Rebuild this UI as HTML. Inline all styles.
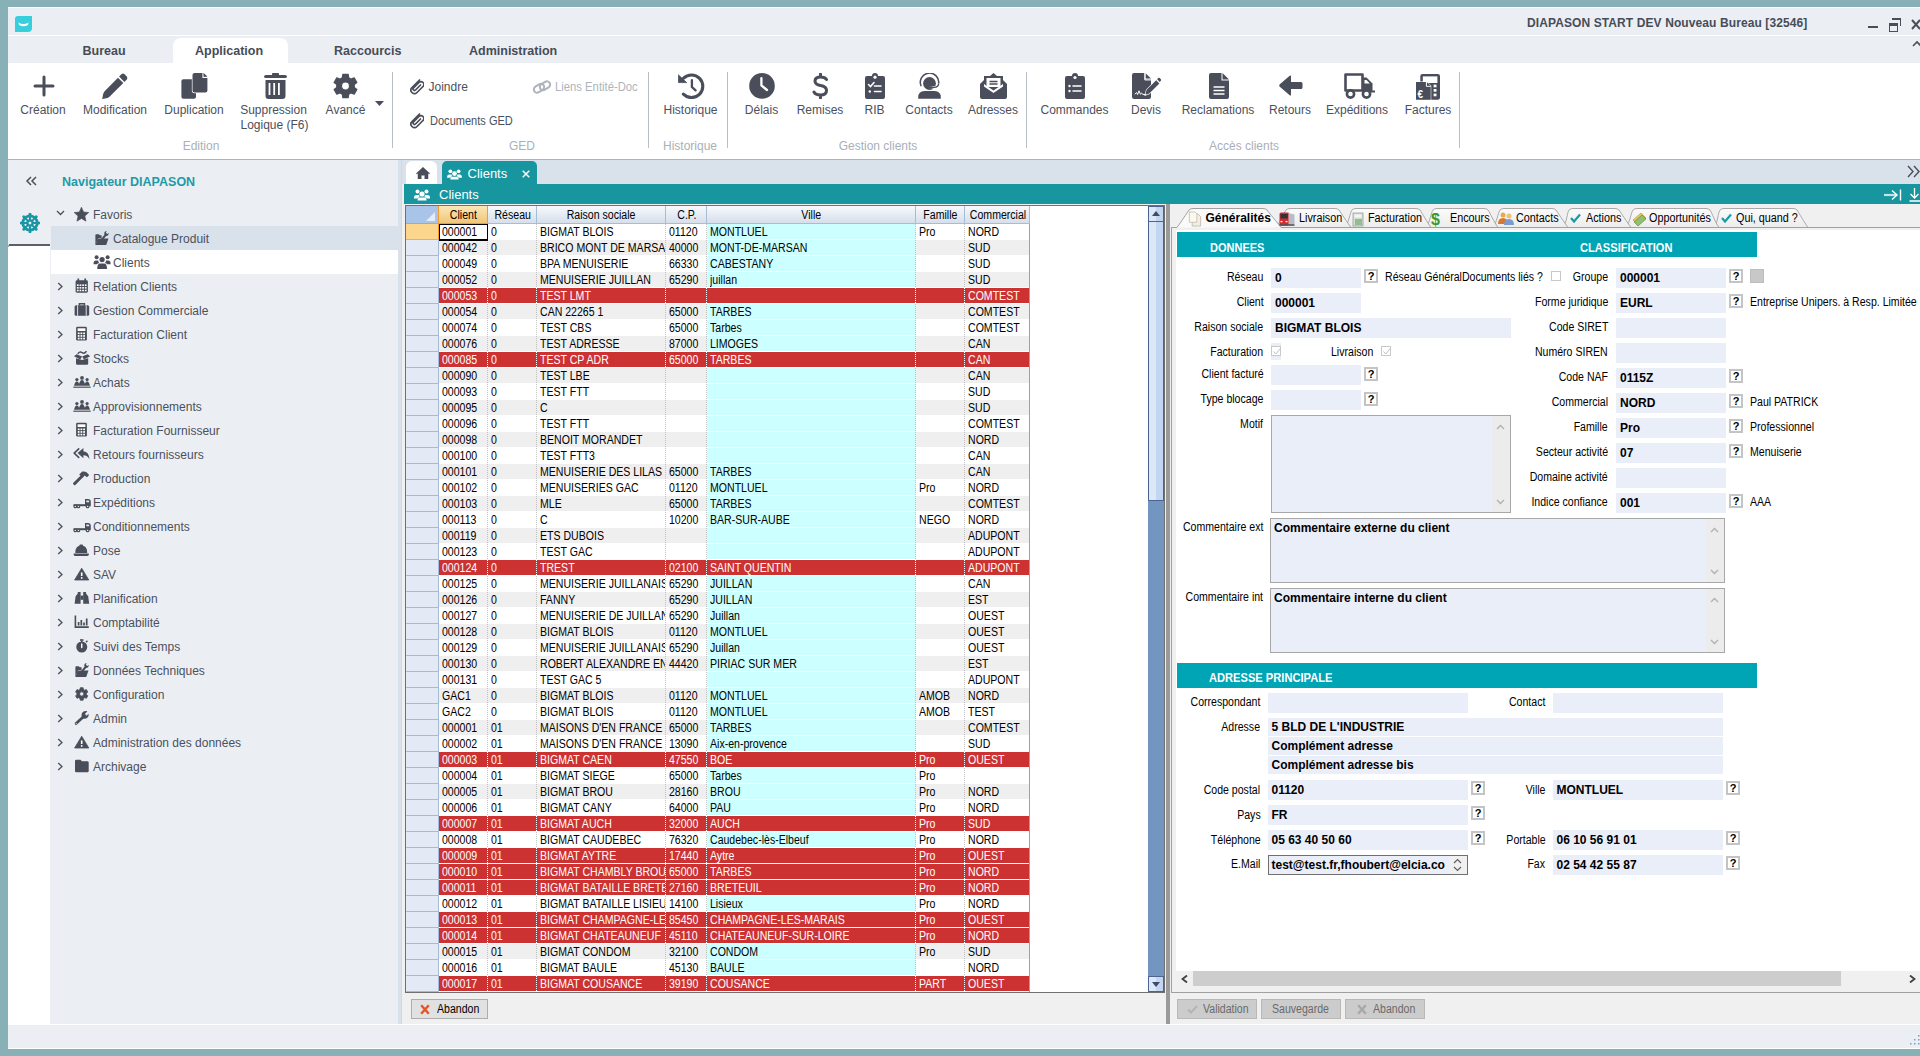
<!DOCTYPE html><html><head><meta charset="utf-8"><style>
html,body{margin:0;padding:0;}
body{width:1920px;height:1056px;overflow:hidden;position:relative;background:#87b1b7;font-family:"Liberation Sans",sans-serif;}
div,svg,span.a{position:absolute;box-sizing:border-box;}
div{white-space:nowrap;}
.rb{font-size:12px;color:#4b505c;line-height:15px;}
.g{font-size:12px;line-height:16px;color:#000;}
.sx{display:inline-block;transform:scaleX(.88);transform-origin:0 0;}
.lb{font-size:11px;color:#000;line-height:14px;text-align:right;}
.vl{font-weight:bold;font-size:12px;color:#000;line-height:14px;}
.inp{background:#e9eef9;}
.q{background:#fff;border:1px solid #a0a0a0;box-shadow:inset -1px -1px 0 #c8c8c8;font-weight:bold;font-size:11px;line-height:12px;text-align:center;color:#000;}
</style></head><body>

<div style="left:8px;top:7px;width:1912px;height:1px;background:#fff"></div>
<div style="left:8px;top:8px;width:1912px;height:27px;background:#ebeff3"></div>
<div style="left:8px;top:35px;width:1912px;height:1px;background:#fff"></div>
<div style="left:8px;top:36px;width:1912px;height:27px;background:#ebeff3"></div>
<div style="left:8px;top:63px;width:1912px;height:96px;background:#fff"></div>
<div style="left:8px;top:159px;width:1912px;height:1px;background:#aab2ba"></div>
<div style="left:8px;top:1024px;width:1912px;height:1px;background:#fff"></div>
<div style="left:8px;top:1025px;width:1912px;height:23px;background:#ebeff3"></div>
<div style="left:8px;top:1048px;width:1912px;height:1px;background:#fff"></div>
<svg style="left:15px;top:16px;" width="17" height="16" viewBox="0 0 17 16"><path d="M3 0H17V12Q17 16 13 16H0V3Q0 0 3 0Z" fill="#37cfdc"/><path d="M3.5 6.5Q8.5 9.5 13.5 6.5L13 9Q8.5 11.5 4 9Z" fill="#fff"/></svg>
<div style="left:1527px;top:13px;font-weight:bold;font-size:12px;line-height:20px;color:#474c58;letter-spacing:0.1px">DIAPASON START DEV Nouveau Bureau [32546]</div>
<div style="left:1868px;top:26px;width:10px;height:2px;background:#4a4e5a"></div>
<div style="left:1889px;top:23px;width:9px;height:9px;border:1px solid #4a4e5a;border-top-width:3px"></div>
<div style="left:1892px;top:18px;width:9px;height:2px;background:#4a4e5a"></div>
<div style="left:1900px;top:18px;width:1px;height:8px;background:#4a4e5a"></div>
<svg style="left:1911px;top:19px;" width="9" height="12" viewBox="0 0 9 12"><path d="M1 1L9 10M9 1L1 10" stroke="#4a4e5a" stroke-width="2"/></svg>
<svg style="left:1912px;top:40px;" width="8" height="7" viewBox="0 0 8 7"><path d="M1 6L5 2L9 6" stroke="#4a4e5a" stroke-width="1.6" fill="none"/></svg>
<div style="left:173px;top:38px;width:115px;height:25px;background:#fff;border-radius:8px 8px 0 0"></div>
<div style="left:82.5px;top:41px;font-weight:bold;font-size:12.5px;line-height:20px;color:#474c58">Bureau</div>
<div style="left:195px;top:41px;font-weight:bold;font-size:12.5px;line-height:20px;color:#474c58">Application</div>
<div style="left:334px;top:41px;font-weight:bold;font-size:12.5px;line-height:20px;color:#474c58">Raccourcis</div>
<div style="left:469px;top:41px;font-weight:bold;font-size:12.5px;line-height:20px;color:#474c58">Administration</div>
<div style="left:392px;top:72px;width:1px;height:76px;background:#b8bec6"></div>
<div style="left:648px;top:72px;width:1px;height:76px;background:#b8bec6"></div>
<div style="left:727px;top:72px;width:1px;height:76px;background:#b8bec6"></div>
<div style="left:1026px;top:72px;width:1px;height:76px;background:#b8bec6"></div>
<div style="left:1459px;top:72px;width:1px;height:76px;background:#b8bec6"></div>
<div style="left:101.0px;top:136px;line-height:20px;font-size:12px;color:#a9b0b8;width:200px;text-align:center;">Edition</div>
<div style="left:422.0px;top:136px;line-height:20px;font-size:12px;color:#a9b0b8;width:200px;text-align:center;">GED</div>
<div style="left:590.0px;top:136px;line-height:20px;font-size:12px;color:#a9b0b8;width:200px;text-align:center;">Historique</div>
<div style="left:778.0px;top:136px;line-height:20px;font-size:12px;color:#a9b0b8;width:200px;text-align:center;">Gestion clients</div>
<div style="left:1144.0px;top:136px;line-height:20px;font-size:12px;color:#a9b0b8;width:200px;text-align:center;">Accès clients</div>
<div style="left:-57.0px;top:100px;line-height:20px;font-size:12px;color:#4b505c;width:200px;text-align:center;">Création</div>
<div style="left:15.0px;top:100px;line-height:20px;font-size:12px;color:#4b505c;width:200px;text-align:center;">Modification</div>
<div style="left:94.0px;top:100px;line-height:20px;font-size:12px;color:#4b505c;width:200px;text-align:center;">Duplication</div>
<div style="left:173.5px;top:100px;line-height:20px;font-size:12px;color:#4b505c;width:200px;text-align:center;">Suppression</div>
<div style="left:245.5px;top:100px;line-height:20px;font-size:12px;color:#4b505c;width:200px;text-align:center;">Avancé</div>
<div style="left:590.5px;top:100px;line-height:20px;font-size:12px;color:#4b505c;width:200px;text-align:center;">Historique</div>
<div style="left:661.5px;top:100px;line-height:20px;font-size:12px;color:#4b505c;width:200px;text-align:center;">Délais</div>
<div style="left:720.0px;top:100px;line-height:20px;font-size:12px;color:#4b505c;width:200px;text-align:center;">Remises</div>
<div style="left:774.5px;top:100px;line-height:20px;font-size:12px;color:#4b505c;width:200px;text-align:center;">RIB</div>
<div style="left:829.0px;top:100px;line-height:20px;font-size:12px;color:#4b505c;width:200px;text-align:center;">Contacts</div>
<div style="left:893.0px;top:100px;line-height:20px;font-size:12px;color:#4b505c;width:200px;text-align:center;">Adresses</div>
<div style="left:974.5px;top:100px;line-height:20px;font-size:12px;color:#4b505c;width:200px;text-align:center;">Commandes</div>
<div style="left:1046.0px;top:100px;line-height:20px;font-size:12px;color:#4b505c;width:200px;text-align:center;">Devis</div>
<div style="left:1118.0px;top:100px;line-height:20px;font-size:12px;color:#4b505c;width:200px;text-align:center;">Reclamations</div>
<div style="left:1190.0px;top:100px;line-height:20px;font-size:12px;color:#4b505c;width:200px;text-align:center;">Retours</div>
<div style="left:1257.0px;top:100px;line-height:20px;font-size:12px;color:#4b505c;width:200px;text-align:center;">Expéditions</div>
<div style="left:1328.0px;top:100px;line-height:20px;font-size:12px;color:#4b505c;width:200px;text-align:center;">Factures</div>
<div style="left:174.5px;top:115px;line-height:20px;font-size:12px;color:#4b505c;width:200px;text-align:center;">Logique (F6)</div>
<div style="left:428.5px;top:77px;line-height:20px;font-size:12px;color:#4b505c;">Joindre</div>
<div style="left:429.5px;top:111px;line-height:20px;font-size:12px;color:#4b505c;"><span class="sx" style="transform:scaleX(.92)">Documents GED</span></div>
<div style="left:554.5px;top:77px;line-height:20px;font-size:12px;color:#aeb4bc;"><span class="sx" style="transform:scaleX(.94)">Liens Entité-Doc</span></div>
<svg style="left:33px;top:75px;" width="22" height="22" viewBox="0 0 22 22"><path d="M11 2V20M2 11H20" stroke="#4a4e5a" stroke-width="3" stroke-linecap="round"/></svg>
<svg style="left:102px;top:73px;" width="26" height="26" viewBox="0 0 26 26"><path d="M19.5 1.2Q21 0 22.5 1.2L24.8 3.5Q26 5 24.8 6.5L22.4 8.9L17.1 3.6Z" fill="#4a4e5a"/><path d="M16 4.7L21.3 10L8 23.3Q6.5 24.6 4.5 25.2L0.2 26L1 21.5Q1.4 19.5 2.8 18Z" fill="#4a4e5a"/></svg>
<svg style="left:181px;top:73px;" width="27" height="26" viewBox="0 0 27 26"><rect x="0.4" y="6.2" width="14.6" height="19.5" rx="2" fill="#4a4e5a"/><path d="M13.5 0H22.5L26.4 3.9V17.5Q26.4 19.5 24.4 19.5H13.5Q11.5 19.5 11.5 17.5V2Q11.5 0 13.5 0Z" fill="#4a4e5a" stroke="#fff" stroke-width="1.3" paint-order="stroke"/><path d="M22 -0.5V4.4H26.9" stroke="#fff" stroke-width="1.1" fill="none"/><path d="M22.8 0.2L26.2 3.6H22.8Z" fill="#4a4e5a"/></svg>
<svg style="left:264px;top:73px;" width="23" height="26" viewBox="0 0 23 26"><path d="M8 1Q8 0 9 0H14Q15 0 15 1V2H21Q23 2 23 3.5Q23 5 21 5H2Q0 5 0 3.5Q0 2 2 2H8Z" fill="#4a4e5a"/><path d="M1.5 7H21.5V23Q21.5 26 18.5 26H4.5Q1.5 26 1.5 23Z" fill="#4a4e5a"/><path d="M5.5 10V22M10.2 10V22M14.9 10V22" stroke="#fff" stroke-width="1.8"/></svg>
<svg style="left:333px;top:73px;" width="25" height="26" viewBox="0 0 25 26"><path d="M8.10 5.38L9.35 4.78L9.82 1.40L15.18 1.40L15.65 4.78L16.90 5.38L18.04 6.16L21.20 4.88L23.88 9.52L21.19 11.62L21.30 13.00L21.19 14.38L23.88 16.48L21.20 21.12L18.04 19.84L16.90 20.62L15.65 21.22L15.18 24.60L9.82 24.60L9.35 21.22L8.10 20.62L6.96 19.84L3.80 21.12L1.12 16.48L3.81 14.38L3.70 13.00L3.81 11.62L1.12 9.52L3.80 4.88L6.96 6.16ZM16.5 13A4.0 4.0 0 1 0 8.5 13A4.0 4.0 0 1 0 16.5 13Z" fill="#4a4e5a" fill-rule="evenodd" stroke="#4a4e5a" stroke-width="1.2" stroke-linejoin="round"/></svg>
<svg style="left:375px;top:101px;" width="9" height="5" viewBox="0 0 9 5"><path d="M0 0H9L4.5 5Z" fill="#4a4e5a"/></svg>
<svg style="left:410px;top:79px;" width="14" height="16" viewBox="0 0 14 16"><g transform="rotate(0)"><path d="M12 3.5L4.5 11Q2 13.5 4.5 16Q7 18.5 9.5 16L15.5 10Q17.5 8 15.5 6Q13.5 4 11.5 6L6 11.5Q5 12.5 6 13.5Q7 14.5 8 13.5L13 8.5" stroke="#4a4e5a" stroke-width="1.7" fill="none" stroke-linecap="round" transform="translate(-2.5,-2.5)"/></g></svg>
<svg style="left:410px;top:113px;" width="14" height="16" viewBox="0 0 14 16"><g transform="rotate(0)"><path d="M12 3.5L4.5 11Q2 13.5 4.5 16Q7 18.5 9.5 16L15.5 10Q17.5 8 15.5 6Q13.5 4 11.5 6L6 11.5Q5 12.5 6 13.5Q7 14.5 8 13.5L13 8.5" stroke="#4a4e5a" stroke-width="1.7" fill="none" stroke-linecap="round" transform="translate(-2.5,-2.5)"/></g></svg>
<svg style="left:532px;top:79px;" width="20" height="16" viewBox="0 0 20 16"><g stroke="#aeb4bc" stroke-width="2" fill="none"><rect x="1.5" y="6" width="11" height="6.5" rx="3.25" transform="rotate(-32 7 9.25)"/><rect x="7.5" y="3.5" width="11" height="6.5" rx="3.25" transform="rotate(-32 13 6.75)"/></g></svg>
<svg style="left:678px;top:73px;" width="27" height="26" viewBox="0 0 27 26"><path d="M5.6 5.2A11.3 11.3 0 1 1 5.4 21.2" stroke="#4a4e5a" stroke-width="3.1" fill="none" stroke-linecap="round"/><path d="M0.3 1.8V9.6H8.6Z" fill="#4a4e5a" stroke="#4a4e5a" stroke-width="0.8" stroke-linejoin="round"/><path d="M13.9 7.2V14L17.6 17.4" stroke="#4a4e5a" stroke-width="2.3" fill="none" stroke-linecap="round"/></svg>
<svg style="left:749px;top:73px;" width="26" height="26" viewBox="0 0 26 26"><circle cx="13" cy="12.9" r="12.8" fill="#4a4e5a"/><path d="M12.4 5.2V12.4L18 17" stroke="#fff" stroke-width="2.3" fill="none" stroke-linecap="round"/></svg>
<svg style="left:812px;top:73px;" width="17" height="26" viewBox="0 0 17 26"><path d="M14.5 6.5Q13 4 8.5 4Q3 4 3 8Q3 11.5 8.5 12.5Q14.5 13.5 14.5 17.5Q14.5 22 8.5 22Q3.5 22 2 19M8.5 1V4M8.5 22V25" stroke="#4a4e5a" stroke-width="3" fill="none" stroke-linecap="round"/></svg>
<svg style="left:865px;top:73px;" width="20" height="26" viewBox="0 0 20 26"><path d="M2 3H7Q7 0 10 0Q13 0 13 3H18Q20 3 20 5V24Q20 26 18 26H2Q0 26 0 24V5Q0 3 2 3Z" fill="#4a4e5a"/><circle cx="10" cy="4.2" r="1.6" fill="#fff"/><path d="M3.5 11.5L5.5 13.5L9 9.5M9.5 13H16M9.5 18.5H16" stroke="#fff" stroke-width="1.6" fill="none" stroke-linecap="round"/><circle cx="4.8" cy="18.5" r="1.2" fill="#fff"/></svg>
<svg style="left:918px;top:73px;" width="24" height="26" viewBox="0 0 24 26"><circle cx="11.5" cy="10.5" r="6.4" fill="#4a4e5a"/><path d="M3.2 13.2A9.2 9.2 0 1 1 20.6 10.8" stroke="#fff" stroke-width="2.6" fill="none"/><path d="M3.2 13.2A9.2 9.2 0 1 1 20.6 10.8" stroke="#4a4e5a" stroke-width="1.5" fill="none"/><path d="M20.6 10.6Q20.6 14.4 16 14.4H11.5" stroke="#fff" stroke-width="2.4" fill="none"/><path d="M20.6 10.6Q20.6 14.4 16 14.4H11.5" stroke="#4a4e5a" stroke-width="1.3" fill="none"/><rect x="9.6" y="13.2" width="5" height="2.6" rx="1.3" fill="#4a4e5a"/><path d="M0.2 24.5Q0.2 18 6.5 18H16.5Q22.8 18 22.8 24.5V25.8H0.2Z" fill="#4a4e5a"/></svg>
<svg style="left:980px;top:73px;" width="27" height="26" viewBox="0 0 27 26"><path d="M4 3H23V11L13.5 17.5L4 11Z" fill="#4a4e5a"/><rect x="6.5" y="5" width="14" height="9" fill="#fff"/><path d="M9.5 8.5H17.5M9.5 11H17.5" stroke="#4a4e5a" stroke-width="1.3"/><path d="M13.5 0L17 3H10Z" fill="#4a4e5a"/><path d="M0 11L4 7V13.5L13.5 20L23 13.5V7L27 11V24Q27 26 25 26H2Q0 26 0 24Z" fill="#4a4e5a"/></svg>
<svg style="left:1065px;top:73px;" width="20" height="26" viewBox="0 0 20 26"><path d="M2 3H7Q7 0 10 0Q13 0 13 3H18Q20 3 20 5V24Q20 26 18 26H2Q0 26 0 24V5Q0 3 2 3Z" fill="#4a4e5a"/><circle cx="10" cy="4.5" r="1.6" fill="#fff"/><circle cx="4.5" cy="13" r="1.2" fill="#fff"/><circle cx="4.5" cy="18" r="1.2" fill="#fff"/><path d="M8 13H16M8 18H16" stroke="#fff" stroke-width="1.6" stroke-linecap="round"/></svg>
<svg style="left:1132px;top:73px;" width="29" height="26" viewBox="0 0 29 26"><path d="M2 0H12.6V6.6H19V24Q19 26 17 26H2Q0 26 0 24V2Q0 0 2 0Z" fill="#4a4e5a"/><path d="M13.6 0.2L19 5.6H13.6Z" fill="#4a4e5a"/><path d="M12.8 0V7H19.2" stroke="#fff" stroke-width="0.9" fill="none"/><path d="M14.6 16.8L24.2 7.2L27.4 10.4L17.8 20Q16.8 21 15.2 21.4L13.2 22Z" fill="#4a4e5a" stroke="#fff" stroke-width="1.2" paint-order="stroke"/><path d="M25.1 6.3L26.3 5.1Q27 4.4 27.7 5.1L28.9 6.3Q29.6 7 28.9 7.7L27.7 8.9Z" fill="#4a4e5a" stroke="#fff" stroke-width="1" paint-order="stroke"/><path d="M2.8 21.3L4.6 19.6L5.6 21.6L7 17.8L8.4 21.2L9.6 20L10.6 21.4H14.5" stroke="#fff" stroke-width="1" fill="none"/></svg>
<svg style="left:1209px;top:73px;" width="20" height="26" viewBox="0 0 20 26"><path d="M2 0H12.5V7.5H20V24Q20 26 18 26H2Q0 26 0 24V2Q0 0 2 0Z" fill="#4a4e5a"/><path d="M13.5 0L20 6.5H13.5Z" fill="#4a4e5a"/><path d="M4.5 14H15.5M4.5 17.5H15.5M4.5 21H15.5" stroke="#fff" stroke-width="1.5"/></svg>
<svg style="left:1279px;top:75px;" width="24" height="21" viewBox="0 0 24 21"><path d="M11 0.5Q12 0 12 1.5V7H22Q23.5 7 23.5 8.5V12.5Q23.5 14 22 14H12V19.5Q12 21 11 20.5L0.5 11.5Q0 10.5 0.5 9.5Z" fill="#4a4e5a"/></svg>
<svg style="left:1343px;top:73px;" width="32" height="26" viewBox="0 0 32 26"><path d="M2.5 1.5H19.5V17.5H2.5Z" stroke="#4a4e5a" stroke-width="2.6" fill="none" stroke-linejoin="round"/><path d="M19 4.5H23.5L29.5 10.5V19H19Z" fill="#4a4e5a"/><path d="M21.5 7H23.5L26.8 10.5H21.5Z" fill="#fff"/><rect x="27" y="17.5" width="5" height="2" fill="#4a4e5a"/><circle cx="7.5" cy="21" r="3.6" fill="#fff" stroke="#4a4e5a" stroke-width="2.6"/><circle cx="23.5" cy="21" r="3.6" fill="#fff" stroke="#4a4e5a" stroke-width="2.6"/></svg>
<svg style="left:1416px;top:74px;" width="24" height="26" viewBox="0 0 24 26"><rect x="4.3" y="0" width="19.7" height="25.8" rx="2.2" fill="#4a4e5a"/><rect x="6.8" y="2.4" width="14.6" height="6.6" fill="#fff"/><g fill="#fff"><rect x="17.6" y="10.6" width="2.9" height="2.7"/><rect x="17.6" y="15" width="2.9" height="2.7"/><rect x="17.6" y="19.6" width="2.9" height="2.7"/></g><path d="M0 8H10.6L14.7 12.1V25.8H0Z" fill="#4a4e5a" stroke="#fff" stroke-width="1.1" paint-order="stroke"/><path d="M10.4 7.8V12.3H14.9" stroke="#fff" stroke-width="1" fill="none"/><path d="M11.3 8.6L14.2 11.5H11.3Z" fill="#4a4e5a"/><text x="1.6" y="23.6" font-family="Liberation Sans" font-weight="bold" font-size="10" fill="#fff">€</text></svg>
<div style="left:8px;top:160px;width:42px;height:85px;background:#ebeff3"></div>
<div style="left:9px;top:244px;width:41px;height:3px;background:#5a5f6a;border-bottom:0.5px solid #fff"></div>
<div style="left:8px;top:247px;width:42px;height:777px;background:#fff"></div>
<div style="left:50px;top:160px;width:348px;height:864px;background:#ebeff3"></div>
<svg style="left:25px;top:176px;" width="12" height="10" viewBox="0 0 12 10"><path d="M6 1L2 5L6 9M11 1L7 5L11 9" stroke="#4a4e5a" stroke-width="1.5" fill="none"/></svg>
<div style="left:62px;top:172px;line-height:20px;font-weight:bold;font-size:12.5px;color:#1e9aa8;">Navigateur DIAPASON</div>
<svg style="left:20px;top:213px;" width="20" height="20" viewBox="0 0 20 20"><g transform="translate(10,10)" stroke="#1a96a4" fill="none"><circle r="7.2" stroke-width="2.8"/><circle r="2.6" stroke-width="2.4"/><path d="M0 -3V-7" stroke-width="2" transform="rotate(0)"/><path d="M0 -3V-7" stroke-width="2" transform="rotate(45)"/><path d="M0 -3V-7" stroke-width="2" transform="rotate(90)"/><path d="M0 -3V-7" stroke-width="2" transform="rotate(135)"/><path d="M0 -3V-7" stroke-width="2" transform="rotate(180)"/><path d="M0 -3V-7" stroke-width="2" transform="rotate(225)"/><path d="M0 -3V-7" stroke-width="2" transform="rotate(270)"/><path d="M0 -3V-7" stroke-width="2" transform="rotate(315)"/></g><g fill="#1a96a4"><circle cx="0" cy="-8.8" r="1.5" transform="translate(10,10) rotate(0)"/><circle cx="0" cy="-8.8" r="1.5" transform="translate(10,10) rotate(45)"/><circle cx="0" cy="-8.8" r="1.5" transform="translate(10,10) rotate(90)"/><circle cx="0" cy="-8.8" r="1.5" transform="translate(10,10) rotate(135)"/><circle cx="0" cy="-8.8" r="1.5" transform="translate(10,10) rotate(180)"/><circle cx="0" cy="-8.8" r="1.5" transform="translate(10,10) rotate(225)"/><circle cx="0" cy="-8.8" r="1.5" transform="translate(10,10) rotate(270)"/><circle cx="0" cy="-8.8" r="1.5" transform="translate(10,10) rotate(315)"/></g></svg>
<div style="left:51px;top:226px;width:347px;height:24px;background:#d9e1ea"></div>
<div style="left:51px;top:250px;width:347px;height:24px;background:#fff"></div>
<div style="left:93px;top:205px;line-height:20px;font-size:12px;color:#4b505c;">Favoris</div>
<svg style="left:73px;top:206px;" width="18" height="18" viewBox="0 0 18 18"><path d="M8.45 1.20L10.57 5.99L15.77 6.52L11.87 10.01L12.98 15.13L8.45 12.50L3.92 15.13L5.03 10.01L1.13 6.52L6.33 5.99Z" fill="#4a4e5a" stroke="#4a4e5a" stroke-width="0.6" stroke-linejoin="round"/></svg>
<svg style="left:56px;top:210px;" width="9" height="6" viewBox="0 0 9 6"><path d="M1 1L4.5 4.5L8 1" stroke="#4a4e5a" stroke-width="1.3" fill="none"/></svg>
<div style="left:113px;top:229px;line-height:20px;font-size:12px;color:#4b505c;">Catalogue Produit</div>
<svg style="left:93px;top:230px;" width="18" height="18" viewBox="0 0 18 18"><path d="M2.4 14.9V5Q2.4 4.2 3.2 4.2H5.8L6.8 5.2H8.6V8H5.3Z" fill="#4a4e5a"/><path d="M4.8 8.6H15.5L13.2 14.9H2.4Z" fill="#4a4e5a"/><path d="M8.6 9.8L12.6 5" stroke="#4a4e5a" stroke-width="2" stroke-linecap="round"/><path d="M11.3 4.2Q11 1.2 13.6 1L12.9 2.8L14.2 4L15.7 3Q15.8 5.8 13 6Z" fill="#4a4e5a"/></svg>
<div style="left:113px;top:253px;line-height:20px;font-size:12px;color:#4b505c;">Clients</div>
<svg style="left:93px;top:254px;" width="18" height="18" viewBox="0 0 18 18"><circle cx="3.6" cy="3.2" r="2" fill="#4a4e5a"/><circle cx="14.6" cy="3.2" r="2" fill="#4a4e5a"/><circle cx="9.1" cy="5.6" r="2.6" fill="#4a4e5a"/><path d="M0.6 9.6Q0.6 6.6 3 6.6H5.2Q5.4 8.2 6.2 8.9Q4.4 9.3 4 10.3H0.6Z" fill="#4a4e5a"/><path d="M17.6 9.6Q17.6 6.6 15.2 6.6H13Q12.8 8.2 12 8.9Q13.8 9.3 14.2 10.3H17.6Z" fill="#4a4e5a"/><path d="M4.2 15Q4.2 9.4 7 9.4H11.2Q14 9.4 14 15Z" fill="#4a4e5a"/></svg>
<div style="left:93px;top:277px;line-height:20px;font-size:12px;color:#4b505c;">Relation Clients</div>
<svg style="left:73px;top:278px;" width="18" height="18" viewBox="0 0 18 18"><rect x="2.6" y="2.3" width="12.3" height="12.4" rx="1.4" fill="#4a4e5a"/><path d="M5.3 0.5V3.5M12.2 0.5V3.5" stroke="#4a4e5a" stroke-width="1.7"/><g fill="#fff"><rect x="3.90" y="6.40" width="1.75" height="1.6"/><rect x="3.90" y="9.05" width="1.75" height="1.6"/><rect x="3.90" y="11.70" width="1.75" height="1.6"/><rect x="6.55" y="6.40" width="1.75" height="1.6"/><rect x="6.55" y="9.05" width="1.75" height="1.6"/><rect x="6.55" y="11.70" width="1.75" height="1.6"/><rect x="9.20" y="6.40" width="1.75" height="1.6"/><rect x="9.20" y="9.05" width="1.75" height="1.6"/><rect x="9.20" y="11.70" width="1.75" height="1.6"/><rect x="11.85" y="6.40" width="1.75" height="1.6"/><rect x="11.85" y="9.05" width="1.75" height="1.6"/><rect x="11.85" y="11.70" width="1.75" height="1.6"/></g></svg>
<svg style="left:57px;top:282px;" width="7" height="9" viewBox="0 0 7 9"><path d="M1.2 1L5 4.5L1.2 8" stroke="#4a4e5a" stroke-width="1.3" fill="none"/></svg>
<div style="left:93px;top:301px;line-height:20px;font-size:12px;color:#4b505c;">Gestion Commerciale</div>
<svg style="left:73px;top:302px;" width="18" height="18" viewBox="0 0 18 18"><rect x="1.6" y="3.2" width="14.6" height="10.6" rx="1.6" fill="#4a4e5a"/><path d="M6.4 3.4V1.8H11.4V3.4" stroke="#4a4e5a" stroke-width="1.5" fill="none"/><path d="M4.6 3.2V13.8M13.2 3.2V13.8" stroke="#ebeff3" stroke-width="0.9"/></svg>
<svg style="left:57px;top:306px;" width="7" height="9" viewBox="0 0 7 9"><path d="M1.2 1L5 4.5L1.2 8" stroke="#4a4e5a" stroke-width="1.3" fill="none"/></svg>
<div style="left:93px;top:325px;line-height:20px;font-size:12px;color:#4b505c;">Facturation Client</div>
<svg style="left:73px;top:326px;" width="18" height="18" viewBox="0 0 18 18"><rect x="3.1" y="0.8" width="10.8" height="13.7" rx="1.3" fill="#4a4e5a"/><rect x="4.6" y="2.3" width="7.8" height="2.7" fill="#fff"/><g fill="#fff"><rect x="4.80" y="6.50" width="1.8" height="1.7"/><rect x="4.80" y="9.10" width="1.8" height="1.7"/><rect x="4.80" y="11.70" width="1.8" height="1.7"/><rect x="7.50" y="6.50" width="1.8" height="1.7"/><rect x="7.50" y="9.10" width="1.8" height="1.7"/><rect x="7.50" y="11.70" width="1.8" height="1.7"/><rect x="10.20" y="6.50" width="1.8" height="1.7"/><rect x="10.20" y="9.10" width="1.8" height="1.7"/><rect x="10.20" y="11.70" width="1.8" height="1.7"/></g></svg>
<svg style="left:57px;top:330px;" width="7" height="9" viewBox="0 0 7 9"><path d="M1.2 1L5 4.5L1.2 8" stroke="#4a4e5a" stroke-width="1.3" fill="none"/></svg>
<div style="left:93px;top:349px;line-height:20px;font-size:12px;color:#4b505c;">Stocks</div>
<svg style="left:73px;top:350px;" width="18" height="18" viewBox="0 0 18 18"><path d="M3 8.2L9.1 10L15.2 8.2V13.4Q15.2 14.7 13.9 14.7H4.3Q3 14.7 3 13.4Z" fill="#4a4e5a"/><path d="M1 6.2L3.6 4.2L9.1 6.4L7.2 9.6Z M17.2 6.2L14.6 4.2L9.1 6.4L11 9.6Z" fill="#4a4e5a"/><path d="M4.8 4Q6.5 1 9.1 2.6Q11.7 4.2 13.4 1.2" stroke="#4a4e5a" stroke-width="1.5" fill="none"/></svg>
<svg style="left:57px;top:354px;" width="7" height="9" viewBox="0 0 7 9"><path d="M1.2 1L5 4.5L1.2 8" stroke="#4a4e5a" stroke-width="1.3" fill="none"/></svg>
<div style="left:93px;top:373px;line-height:20px;font-size:12px;color:#4b505c;">Achats</div>
<svg style="left:73px;top:374px;" width="18" height="18" viewBox="0 0 18 18"><path d="M0.3 12.6H17.7V13.8H0.3Z" fill="#4a4e5a"/><path d="M1 11.8Q2 7.5 3.9 7.5Q5.8 7.5 6.6 11.8ZM5.6 11.8Q6.8 6 9 6Q11.2 6 12.4 11.8ZM11.4 11.8Q12.2 7.5 14.1 7.5Q16 7.5 17 11.8Z" fill="#4a4e5a"/><circle cx="3.9" cy="5.6" r="1.6" fill="#4a4e5a"/><circle cx="9" cy="3.9" r="1.9" fill="#4a4e5a"/><circle cx="14.1" cy="5.6" r="1.6" fill="#4a4e5a"/></svg>
<svg style="left:57px;top:378px;" width="7" height="9" viewBox="0 0 7 9"><path d="M1.2 1L5 4.5L1.2 8" stroke="#4a4e5a" stroke-width="1.3" fill="none"/></svg>
<div style="left:93px;top:397px;line-height:20px;font-size:12px;color:#4b505c;">Approvisionnements</div>
<svg style="left:73px;top:398px;" width="18" height="18" viewBox="0 0 18 18"><path d="M0.3 12.6H17.7V13.8H0.3Z" fill="#4a4e5a"/><path d="M1 11.8Q2 7.5 3.9 7.5Q5.8 7.5 6.6 11.8ZM5.6 11.8Q6.8 6 9 6Q11.2 6 12.4 11.8ZM11.4 11.8Q12.2 7.5 14.1 7.5Q16 7.5 17 11.8Z" fill="#4a4e5a"/><circle cx="3.9" cy="5.6" r="1.6" fill="#4a4e5a"/><circle cx="9" cy="3.9" r="1.9" fill="#4a4e5a"/><circle cx="14.1" cy="5.6" r="1.6" fill="#4a4e5a"/></svg>
<svg style="left:57px;top:402px;" width="7" height="9" viewBox="0 0 7 9"><path d="M1.2 1L5 4.5L1.2 8" stroke="#4a4e5a" stroke-width="1.3" fill="none"/></svg>
<div style="left:93px;top:421px;line-height:20px;font-size:12px;color:#4b505c;">Facturation Fournisseur</div>
<svg style="left:73px;top:422px;" width="18" height="18" viewBox="0 0 18 18"><rect x="3.1" y="0.8" width="10.8" height="13.7" rx="1.3" fill="#4a4e5a"/><rect x="4.6" y="2.3" width="7.8" height="2.7" fill="#fff"/><g fill="#fff"><rect x="4.80" y="6.50" width="1.8" height="1.7"/><rect x="4.80" y="9.10" width="1.8" height="1.7"/><rect x="4.80" y="11.70" width="1.8" height="1.7"/><rect x="7.50" y="6.50" width="1.8" height="1.7"/><rect x="7.50" y="9.10" width="1.8" height="1.7"/><rect x="7.50" y="11.70" width="1.8" height="1.7"/><rect x="10.20" y="6.50" width="1.8" height="1.7"/><rect x="10.20" y="9.10" width="1.8" height="1.7"/><rect x="10.20" y="11.70" width="1.8" height="1.7"/></g></svg>
<svg style="left:57px;top:426px;" width="7" height="9" viewBox="0 0 7 9"><path d="M1.2 1L5 4.5L1.2 8" stroke="#4a4e5a" stroke-width="1.3" fill="none"/></svg>
<div style="left:93px;top:445px;line-height:20px;font-size:12px;color:#4b505c;">Retours fournisseurs</div>
<svg style="left:73px;top:446px;" width="18" height="18" viewBox="0 0 18 18"><path d="M6.2 2.4L1.2 7.1L6.2 11.8" stroke="#4a4e5a" stroke-width="1.6" fill="none" stroke-linejoin="round"/><path d="M10.4 2L4.6 7.1L10.4 12.2V9.2Q14.6 9.2 16.4 13.4Q16.2 5.8 10.4 5.2Z" fill="#4a4e5a"/></svg>
<svg style="left:57px;top:450px;" width="7" height="9" viewBox="0 0 7 9"><path d="M1.2 1L5 4.5L1.2 8" stroke="#4a4e5a" stroke-width="1.3" fill="none"/></svg>
<div style="left:93px;top:469px;line-height:20px;font-size:12px;color:#4b505c;">Production</div>
<svg style="left:73px;top:470px;" width="18" height="18" viewBox="0 0 18 18"><path d="M1.6 13.6L9 6.3" stroke="#4a4e5a" stroke-width="2.9" stroke-linecap="round"/><path d="M6.2 4.6L9.2 1.6Q11.8 0.9 13.8 2.6L16.2 5.1L14 7.3L11.6 5.6L9.6 7.8Z" fill="#4a4e5a"/></svg>
<svg style="left:57px;top:474px;" width="7" height="9" viewBox="0 0 7 9"><path d="M1.2 1L5 4.5L1.2 8" stroke="#4a4e5a" stroke-width="1.3" fill="none"/></svg>
<div style="left:93px;top:493px;line-height:20px;font-size:12px;color:#4b505c;">Expéditions</div>
<svg style="left:73px;top:494px;" width="18" height="18" viewBox="0 0 18 18"><path d="M0.5 10.2H12.2V12.2H0.5Z" fill="#4a4e5a"/><path d="M12 5H15Q17.8 5 17.8 8V12.2H12Z" fill="#4a4e5a"/><path d="M13.4 6.4H15Q16.2 6.4 16.2 7.8V8.3H13.4Z" fill="#ebeff3"/><circle cx="2.3" cy="12.4" r="1.3" fill="#ebeff3" stroke="#4a4e5a" stroke-width="1.2"/><circle cx="5.4" cy="12.4" r="1.3" fill="#ebeff3" stroke="#4a4e5a" stroke-width="1.2"/><circle cx="14.6" cy="12.4" r="1.3" fill="#ebeff3" stroke="#4a4e5a" stroke-width="1.2"/></svg>
<svg style="left:57px;top:498px;" width="7" height="9" viewBox="0 0 7 9"><path d="M1.2 1L5 4.5L1.2 8" stroke="#4a4e5a" stroke-width="1.3" fill="none"/></svg>
<div style="left:93px;top:517px;line-height:20px;font-size:12px;color:#4b505c;">Conditionnements</div>
<svg style="left:73px;top:518px;" width="18" height="18" viewBox="0 0 18 18"><path d="M0.5 10.2H12.2V12.2H0.5Z" fill="#4a4e5a"/><path d="M12 5H15Q17.8 5 17.8 8V12.2H12Z" fill="#4a4e5a"/><path d="M13.4 6.4H15Q16.2 6.4 16.2 7.8V8.3H13.4Z" fill="#ebeff3"/><circle cx="2.3" cy="12.4" r="1.3" fill="#ebeff3" stroke="#4a4e5a" stroke-width="1.2"/><circle cx="5.4" cy="12.4" r="1.3" fill="#ebeff3" stroke="#4a4e5a" stroke-width="1.2"/><circle cx="14.6" cy="12.4" r="1.3" fill="#ebeff3" stroke="#4a4e5a" stroke-width="1.2"/></svg>
<svg style="left:57px;top:522px;" width="7" height="9" viewBox="0 0 7 9"><path d="M1.2 1L5 4.5L1.2 8" stroke="#4a4e5a" stroke-width="1.3" fill="none"/></svg>
<div style="left:93px;top:541px;line-height:20px;font-size:12px;color:#4b505c;">Pose</div>
<svg style="left:73px;top:542px;" width="18" height="18" viewBox="0 0 18 18"><path d="M2.3 10.9Q2.3 3.6 8.25 3.6Q14.2 3.6 14.2 10.9Z" fill="#4a4e5a"/><rect x="6.5" y="2.5" width="3.5" height="3.5" rx="0.8" fill="#4a4e5a"/><path d="M0.7 11.4H15.8V12.6Q15.8 13.9 14.5 13.9H2Q0.7 13.9 0.7 12.6Z" fill="#4a4e5a"/></svg>
<svg style="left:57px;top:546px;" width="7" height="9" viewBox="0 0 7 9"><path d="M1.2 1L5 4.5L1.2 8" stroke="#4a4e5a" stroke-width="1.3" fill="none"/></svg>
<div style="left:93px;top:565px;line-height:20px;font-size:12px;color:#4b505c;">SAV</div>
<svg style="left:73px;top:566px;" width="18" height="18" viewBox="0 0 18 18"><path d="M8.7 2.2L15.8 14H1.6Z" fill="#4a4e5a" stroke="#4a4e5a" stroke-width="0.8" stroke-linejoin="round"/><path d="M8.7 6.4V10" stroke="#fff" stroke-width="1.6"/><circle cx="8.7" cy="11.9" r="0.95" fill="#fff"/></svg>
<svg style="left:57px;top:570px;" width="7" height="9" viewBox="0 0 7 9"><path d="M1.2 1L5 4.5L1.2 8" stroke="#4a4e5a" stroke-width="1.3" fill="none"/></svg>
<div style="left:93px;top:589px;line-height:20px;font-size:12px;color:#4b505c;">Planification</div>
<svg style="left:73px;top:590px;" width="18" height="18" viewBox="0 0 18 18"><path d="M1.6 13.8L2.6 6.2L4.8 3.6V1.9H7.6V13.8Z M16.2 13.8L15.2 6.2L13 3.6V1.9H10.2V13.8Z" fill="#4a4e5a"/><path d="M7.4 5.6H10.4V9.8H7.4Z" fill="#4a4e5a"/></svg>
<svg style="left:57px;top:594px;" width="7" height="9" viewBox="0 0 7 9"><path d="M1.2 1L5 4.5L1.2 8" stroke="#4a4e5a" stroke-width="1.3" fill="none"/></svg>
<div style="left:93px;top:613px;line-height:20px;font-size:12px;color:#4b505c;">Comptabilité</div>
<svg style="left:73px;top:614px;" width="18" height="18" viewBox="0 0 18 18"><path d="M2.4 1.6V13.1H15.8" stroke="#4a4e5a" stroke-width="1.6" fill="none"/><path d="M5.6 8V11.5M8.3 6V11.5M11 8.6V11.5M13.7 4.6V11.5" stroke="#4a4e5a" stroke-width="1.7"/></svg>
<svg style="left:57px;top:618px;" width="7" height="9" viewBox="0 0 7 9"><path d="M1.2 1L5 4.5L1.2 8" stroke="#4a4e5a" stroke-width="1.3" fill="none"/></svg>
<div style="left:93px;top:637px;line-height:20px;font-size:12px;color:#4b505c;">Suivi des Temps</div>
<svg style="left:73px;top:638px;" width="18" height="18" viewBox="0 0 18 18"><circle cx="8.75" cy="9" r="5.5" fill="#4a4e5a"/><rect x="7" y="1.2" width="3.5" height="1.6" fill="#4a4e5a"/><rect x="8" y="2.5" width="1.5" height="2" fill="#4a4e5a"/><path d="M13 4.2L14.4 2.8" stroke="#4a4e5a" stroke-width="1.5"/><path d="M8.75 6V9.6" stroke="#fff" stroke-width="1.4" stroke-linecap="round"/></svg>
<svg style="left:57px;top:642px;" width="7" height="9" viewBox="0 0 7 9"><path d="M1.2 1L5 4.5L1.2 8" stroke="#4a4e5a" stroke-width="1.3" fill="none"/></svg>
<div style="left:93px;top:661px;line-height:20px;font-size:12px;color:#4b505c;">Données Techniques</div>
<svg style="left:73px;top:662px;" width="18" height="18" viewBox="0 0 18 18"><path d="M2.4 14.9V5Q2.4 4.2 3.2 4.2H5.8L6.8 5.2H8.6V8H5.3Z" fill="#4a4e5a"/><path d="M4.8 8.6H15.5L13.2 14.9H2.4Z" fill="#4a4e5a"/><path d="M8.6 9.8L12.6 5" stroke="#4a4e5a" stroke-width="2" stroke-linecap="round"/><path d="M11.3 4.2Q11 1.2 13.6 1L12.9 2.8L14.2 4L15.7 3Q15.8 5.8 13 6Z" fill="#4a4e5a"/></svg>
<svg style="left:57px;top:666px;" width="7" height="9" viewBox="0 0 7 9"><path d="M1.2 1L5 4.5L1.2 8" stroke="#4a4e5a" stroke-width="1.3" fill="none"/></svg>
<div style="left:93px;top:685px;line-height:20px;font-size:12px;color:#4b505c;">Configuration</div>
<svg style="left:73px;top:686px;" width="18" height="18" viewBox="0 0 18 18"><path d="M6.30 3.79L6.98 3.47L7.26 1.71L10.14 1.71L10.42 3.47L11.10 3.79L11.72 4.22L13.38 3.59L14.82 6.08L13.44 7.20L13.50 7.95L13.44 8.70L14.82 9.82L13.38 12.31L11.72 11.68L11.10 12.11L10.42 12.43L10.14 14.19L7.26 14.19L6.98 12.43L6.30 12.11L5.68 11.68L4.02 12.31L2.58 9.82L3.96 8.70L3.90 7.95L3.96 7.20L2.58 6.08L4.02 3.59L5.68 4.22ZM10.799999999999999 7.95A2.1 2.1 0 1 0 6.6 7.95A2.1 2.1 0 1 0 10.799999999999999 7.95Z" fill="#4a4e5a" fill-rule="evenodd" stroke="#4a4e5a" stroke-width="0.8" stroke-linejoin="round"/></svg>
<svg style="left:57px;top:690px;" width="7" height="9" viewBox="0 0 7 9"><path d="M1.2 1L5 4.5L1.2 8" stroke="#4a4e5a" stroke-width="1.3" fill="none"/></svg>
<div style="left:93px;top:709px;line-height:20px;font-size:12px;color:#4b505c;">Admin</div>
<svg style="left:73px;top:710px;" width="18" height="18" viewBox="0 0 18 18"><path d="M3.1 13.6L9.6 7.4" stroke="#4a4e5a" stroke-width="2.7" stroke-linecap="round"/><path d="M8.6 6.6Q8 2.4 11.2 1.2Q13 0.6 14.4 1.2L11.9 3.9L13.7 5.8L15.5 3.4Q16 5.6 14.8 7.2Q13 9.2 10.4 8.8Z" fill="#4a4e5a"/><circle cx="3.2" cy="13.5" r="0.6" fill="#ebeff3"/></svg>
<svg style="left:57px;top:714px;" width="7" height="9" viewBox="0 0 7 9"><path d="M1.2 1L5 4.5L1.2 8" stroke="#4a4e5a" stroke-width="1.3" fill="none"/></svg>
<div style="left:93px;top:733px;line-height:20px;font-size:12px;color:#4b505c;">Administration des données</div>
<svg style="left:73px;top:734px;" width="18" height="18" viewBox="0 0 18 18"><path d="M8.7 2.2L15.8 14H1.6Z" fill="#4a4e5a" stroke="#4a4e5a" stroke-width="0.8" stroke-linejoin="round"/><path d="M8.7 6.4V10" stroke="#fff" stroke-width="1.6"/><circle cx="8.7" cy="11.9" r="0.95" fill="#fff"/></svg>
<svg style="left:57px;top:738px;" width="7" height="9" viewBox="0 0 7 9"><path d="M1.2 1L5 4.5L1.2 8" stroke="#4a4e5a" stroke-width="1.3" fill="none"/></svg>
<div style="left:93px;top:757px;line-height:20px;font-size:12px;color:#4b505c;">Archivage</div>
<svg style="left:73px;top:758px;" width="18" height="18" viewBox="0 0 18 18"><path d="M2 3Q2 1.7 3.3 1.7H7.4L9 3.3H14.4Q15.7 3.3 15.7 4.6V12.9Q15.7 14.2 14.4 14.2H3.3Q2 14.2 2 12.9Z" fill="#4a4e5a"/></svg>
<svg style="left:57px;top:762px;" width="7" height="9" viewBox="0 0 7 9"><path d="M1.2 1L5 4.5L1.2 8" stroke="#4a4e5a" stroke-width="1.3" fill="none"/></svg>
<div style="left:398px;top:160px;width:1522px;height:864px;background:#f0f0f0"></div>
<div style="left:398px;top:160px;width:4px;height:864px;background:#d9e2ea"></div>
<div style="left:401px;top:160px;width:1px;height:864px;background:#c5dbf3"></div>
<div style="left:402px;top:160px;width:1518px;height:24px;background:#d9e2ea"></div>
<div style="left:406px;top:161px;width:31px;height:23px;background:#fff;border-radius:6px 6px 0 0"></div>
<svg style="left:416px;top:167px;" width="14" height="12" viewBox="0 0 14 12"><path d="M7 0.3L13.8 6.6H12V12H8.8V8.2H5.2V12H2V6.6H0.2Z" fill="#4a4e5a" stroke="#4a4e5a" stroke-width="0.5" stroke-linejoin="round"/></svg>
<div style="left:442px;top:161px;width:95px;height:23px;background:#17969f;border-radius:5px 5px 0 0"></div>
<svg style="left:447px;top:168px;" width="15" height="12" viewBox="0 0 16 13"><circle cx="3.5" cy="3.5" r="2" fill="#fff"/><circle cx="12.5" cy="3.5" r="2" fill="#fff"/><circle cx="8" cy="6" r="2.6" fill="#fff"/><path d="M0 9.5Q0 7 2.5 7H4.8Q5.2 8.5 5.8 9Q3.8 9.5 3.5 10.5H0Z" fill="#fff"/><path d="M16 9.5Q16 7 13.5 7H11.2Q10.8 8.5 10.2 9Q12.2 9.5 12.5 10.5H16Z" fill="#fff"/><path d="M3.5 12.5Q3.5 9.5 6 9.5H10Q12.5 9.5 12.5 12.5Z" fill="#fff"/></svg>
<div style="left:467.5px;top:164px;line-height:20px;font-size:13px;color:#fff;">Clients</div>
<svg style="left:522px;top:170px;" width="8" height="8" viewBox="0 0 8 8"><path d="M0.7 0.7L7.3 7.3M7.3 0.7L0.7 7.3" stroke="#fff" stroke-width="1.5"/></svg>
<svg style="left:1907px;top:165px;" width="13" height="13" viewBox="0 0 13 13"><path d="M1 1L6 6.5L1 12M7 1L12 6.5L7 12" stroke="#4a4e5a" stroke-width="1.4" fill="none"/></svg>
<div style="left:404px;top:184px;width:1516px;height:20px;background:#17969f"></div>
<svg style="left:414px;top:188px;" width="16" height="13" viewBox="0 0 16 13"><circle cx="3.5" cy="3.5" r="2" fill="#fff"/><circle cx="12.5" cy="3.5" r="2" fill="#fff"/><circle cx="8" cy="6" r="2.6" fill="#fff"/><path d="M0 9.5Q0 7 2.5 7H4.8Q5.2 8.5 5.8 9Q3.8 9.5 3.5 10.5H0Z" fill="#fff"/><path d="M16 9.5Q16 7 13.5 7H11.2Q10.8 8.5 10.2 9Q12.2 9.5 12.5 10.5H16Z" fill="#fff"/><path d="M3.5 12.5Q3.5 9.5 6 9.5H10Q12.5 9.5 12.5 12.5Z" fill="#fff"/></svg>
<div style="left:439px;top:185px;line-height:20px;font-size:13px;color:#fff;">Clients</div>
<svg style="left:1883px;top:189px;" width="19" height="12" viewBox="0 0 19 12"><path d="M1 6H14" stroke="#bfe3e6" stroke-width="2.2"/><path d="M9 1.5L14 6L9 10.5" stroke="#fff" stroke-width="1.4" fill="none"/><path d="M17.5 0.5V11.5" stroke="#fff" stroke-width="1.4"/></svg>
<svg style="left:1909px;top:188px;" width="11" height="14" viewBox="0 0 11 14"><path d="M5.5 0V10M1.5 6L5.5 10L9.5 6M0.5 13H11" stroke="#fff" stroke-width="1.3" fill="none"/></svg>
<div style="left:405px;top:205px;width:760px;height:788px;background:#fff;border:1px solid #707070"></div>
<div style="left:406px;top:206px;width:33px;height:18px;background:#a9c4e9;border-right:1px solid #f59a2c;border-bottom:1px solid #f59a2c"></div>
<svg style="left:426px;top:212px;" width="9" height="9" viewBox="0 0 9 9"><path d="M9 0V9H0Z" fill="#e6ecf6"/></svg>
<div style="left:439px;top:206px;width:49px;height:18px;background:linear-gradient(#fbe7b8,#f0c676);border-right:1px solid #f59a2c;border-bottom:1px solid #f59a2c;"></div>
<div style="left:439.5px;top:205px;line-height:20px;font-size:12px;color:#000;width:48px;text-align:center;"><span class="sx" style="transform-origin:50% 0">Client</span></div>
<div style="left:488px;top:206px;width:49px;height:18px;background:linear-gradient(#f7f9fc,#d6dfec);border-right:1px solid #a9bcd6;border-bottom:1px solid #a9bcd6;"></div>
<div style="left:488.5px;top:205px;line-height:20px;font-size:12px;color:#000;width:48px;text-align:center;"><span class="sx" style="transform-origin:50% 0">Réseau</span></div>
<div style="left:537px;top:206px;width:129px;height:18px;background:linear-gradient(#f7f9fc,#d6dfec);border-right:1px solid #a9bcd6;border-bottom:1px solid #a9bcd6;"></div>
<div style="left:537.5px;top:205px;line-height:20px;font-size:12px;color:#000;width:128px;text-align:center;"><span class="sx" style="transform-origin:50% 0">Raison sociale</span></div>
<div style="left:666px;top:206px;width:41px;height:18px;background:linear-gradient(#f7f9fc,#d6dfec);border-right:1px solid #a9bcd6;border-bottom:1px solid #a9bcd6;"></div>
<div style="left:666.5px;top:205px;line-height:20px;font-size:12px;color:#000;width:40px;text-align:center;"><span class="sx" style="transform-origin:50% 0">C.P.</span></div>
<div style="left:707px;top:206px;width:209px;height:18px;background:linear-gradient(#f7f9fc,#d6dfec);border-right:1px solid #a9bcd6;border-bottom:1px solid #a9bcd6;"></div>
<div style="left:707.5px;top:205px;line-height:20px;font-size:12px;color:#000;width:208px;text-align:center;"><span class="sx" style="transform-origin:50% 0">Ville</span></div>
<div style="left:916px;top:206px;width:49px;height:18px;background:linear-gradient(#f7f9fc,#d6dfec);border-right:1px solid #a9bcd6;border-bottom:1px solid #a9bcd6;"></div>
<div style="left:916.5px;top:205px;line-height:20px;font-size:12px;color:#000;width:48px;text-align:center;"><span class="sx" style="transform-origin:50% 0">Famille</span></div>
<div style="left:965px;top:206px;width:65px;height:18px;background:linear-gradient(#f7f9fc,#d6dfec);border-right:1px solid #a9bcd6;border-bottom:1px solid #a9bcd6;"></div>
<div style="left:965.5px;top:205px;line-height:20px;font-size:12px;color:#000;width:64px;text-align:center;"><span class="sx" style="transform-origin:50% 0">Commercial</span></div>
<div style="left:406px;top:224px;width:33px;height:16px;background:#fdd68e;border-right:1px solid #f59a2c;border-bottom:1px solid #a3bcd9"></div>
<div style="left:439px;top:224px;width:591px;height:15px;background:#fff"></div>
<div style="left:707px;top:224px;width:209px;height:15px;background:#ccffff"></div>
<div class="g" style="left:442px;top:224px;width:45px;height:16px;overflow:hidden;color:#000"><span class="sx">000001</span></div>
<div class="g" style="left:491px;top:224px;width:45px;height:16px;overflow:hidden;color:#000"><span class="sx">0</span></div>
<div class="g" style="left:540px;top:224px;width:125px;height:16px;overflow:hidden;color:#000"><span class="sx">BIGMAT BLOIS</span></div>
<div class="g" style="left:669px;top:224px;width:37px;height:16px;overflow:hidden;color:#000"><span class="sx">01120</span></div>
<div class="g" style="left:710px;top:224px;width:205px;height:16px;overflow:hidden;color:#000"><span class="sx">MONTLUEL</span></div>
<div class="g" style="left:919px;top:224px;width:45px;height:16px;overflow:hidden;color:#000"><span class="sx">Pro</span></div>
<div class="g" style="left:968px;top:224px;width:61px;height:16px;overflow:hidden;color:#000"><span class="sx">NORD</span></div>
<div style="left:406px;top:240px;width:33px;height:16px;background:#e3eaf6;border-right:1px solid #a3bcd9;border-bottom:1px solid #a3bcd9"></div>
<div style="left:439px;top:240px;width:591px;height:15px;background:#efefef"></div>
<div style="left:707px;top:240px;width:209px;height:15px;background:#ccffff"></div>
<div class="g" style="left:442px;top:240px;width:45px;height:16px;overflow:hidden;color:#000"><span class="sx">000042</span></div>
<div class="g" style="left:491px;top:240px;width:45px;height:16px;overflow:hidden;color:#000"><span class="sx">0</span></div>
<div class="g" style="left:540px;top:240px;width:125px;height:16px;overflow:hidden;color:#000"><span class="sx">BRICO MONT DE MARSAN</span></div>
<div class="g" style="left:669px;top:240px;width:37px;height:16px;overflow:hidden;color:#000"><span class="sx">40000</span></div>
<div class="g" style="left:710px;top:240px;width:205px;height:16px;overflow:hidden;color:#000"><span class="sx">MONT-DE-MARSAN</span></div>
<div class="g" style="left:968px;top:240px;width:61px;height:16px;overflow:hidden;color:#000"><span class="sx">SUD</span></div>
<div style="left:406px;top:256px;width:33px;height:16px;background:#e3eaf6;border-right:1px solid #a3bcd9;border-bottom:1px solid #a3bcd9"></div>
<div style="left:439px;top:256px;width:591px;height:15px;background:#fff"></div>
<div style="left:707px;top:256px;width:209px;height:15px;background:#ccffff"></div>
<div class="g" style="left:442px;top:256px;width:45px;height:16px;overflow:hidden;color:#000"><span class="sx">000049</span></div>
<div class="g" style="left:491px;top:256px;width:45px;height:16px;overflow:hidden;color:#000"><span class="sx">0</span></div>
<div class="g" style="left:540px;top:256px;width:125px;height:16px;overflow:hidden;color:#000"><span class="sx">BPA MENUISERIE</span></div>
<div class="g" style="left:669px;top:256px;width:37px;height:16px;overflow:hidden;color:#000"><span class="sx">66330</span></div>
<div class="g" style="left:710px;top:256px;width:205px;height:16px;overflow:hidden;color:#000"><span class="sx">CABESTANY</span></div>
<div class="g" style="left:968px;top:256px;width:61px;height:16px;overflow:hidden;color:#000"><span class="sx">SUD</span></div>
<div style="left:406px;top:272px;width:33px;height:16px;background:#e3eaf6;border-right:1px solid #a3bcd9;border-bottom:1px solid #a3bcd9"></div>
<div style="left:439px;top:272px;width:591px;height:15px;background:#efefef"></div>
<div style="left:707px;top:272px;width:209px;height:15px;background:#ccffff"></div>
<div class="g" style="left:442px;top:272px;width:45px;height:16px;overflow:hidden;color:#000"><span class="sx">000052</span></div>
<div class="g" style="left:491px;top:272px;width:45px;height:16px;overflow:hidden;color:#000"><span class="sx">0</span></div>
<div class="g" style="left:540px;top:272px;width:125px;height:16px;overflow:hidden;color:#000"><span class="sx">MENUISERIE JUILLAN</span></div>
<div class="g" style="left:669px;top:272px;width:37px;height:16px;overflow:hidden;color:#000"><span class="sx">65290</span></div>
<div class="g" style="left:710px;top:272px;width:205px;height:16px;overflow:hidden;color:#000"><span class="sx">juillan</span></div>
<div class="g" style="left:968px;top:272px;width:61px;height:16px;overflow:hidden;color:#000"><span class="sx">SUD</span></div>
<div style="left:406px;top:288px;width:33px;height:16px;background:#e3eaf6;border-right:1px solid #a3bcd9;border-bottom:1px solid #a3bcd9"></div>
<div style="left:439px;top:288px;width:591px;height:15px;background:#cc3232"></div>
<div class="g" style="left:442px;top:288px;width:45px;height:16px;overflow:hidden;color:#fff"><span class="sx">000053</span></div>
<div class="g" style="left:491px;top:288px;width:45px;height:16px;overflow:hidden;color:#fff"><span class="sx">0</span></div>
<div class="g" style="left:540px;top:288px;width:125px;height:16px;overflow:hidden;color:#fff"><span class="sx">TEST LMT</span></div>
<div class="g" style="left:968px;top:288px;width:61px;height:16px;overflow:hidden;color:#fff"><span class="sx">COMTEST</span></div>
<div style="left:406px;top:304px;width:33px;height:16px;background:#e3eaf6;border-right:1px solid #a3bcd9;border-bottom:1px solid #a3bcd9"></div>
<div style="left:439px;top:304px;width:591px;height:15px;background:#efefef"></div>
<div style="left:707px;top:304px;width:209px;height:15px;background:#ccffff"></div>
<div class="g" style="left:442px;top:304px;width:45px;height:16px;overflow:hidden;color:#000"><span class="sx">000054</span></div>
<div class="g" style="left:491px;top:304px;width:45px;height:16px;overflow:hidden;color:#000"><span class="sx">0</span></div>
<div class="g" style="left:540px;top:304px;width:125px;height:16px;overflow:hidden;color:#000"><span class="sx">CAN 22265 1</span></div>
<div class="g" style="left:669px;top:304px;width:37px;height:16px;overflow:hidden;color:#000"><span class="sx">65000</span></div>
<div class="g" style="left:710px;top:304px;width:205px;height:16px;overflow:hidden;color:#000"><span class="sx">TARBES</span></div>
<div class="g" style="left:968px;top:304px;width:61px;height:16px;overflow:hidden;color:#000"><span class="sx">COMTEST</span></div>
<div style="left:406px;top:320px;width:33px;height:16px;background:#e3eaf6;border-right:1px solid #a3bcd9;border-bottom:1px solid #a3bcd9"></div>
<div style="left:439px;top:320px;width:591px;height:15px;background:#fff"></div>
<div style="left:707px;top:320px;width:209px;height:15px;background:#ccffff"></div>
<div class="g" style="left:442px;top:320px;width:45px;height:16px;overflow:hidden;color:#000"><span class="sx">000074</span></div>
<div class="g" style="left:491px;top:320px;width:45px;height:16px;overflow:hidden;color:#000"><span class="sx">0</span></div>
<div class="g" style="left:540px;top:320px;width:125px;height:16px;overflow:hidden;color:#000"><span class="sx">TEST CBS</span></div>
<div class="g" style="left:669px;top:320px;width:37px;height:16px;overflow:hidden;color:#000"><span class="sx">65000</span></div>
<div class="g" style="left:710px;top:320px;width:205px;height:16px;overflow:hidden;color:#000"><span class="sx">Tarbes</span></div>
<div class="g" style="left:968px;top:320px;width:61px;height:16px;overflow:hidden;color:#000"><span class="sx">COMTEST</span></div>
<div style="left:406px;top:336px;width:33px;height:16px;background:#e3eaf6;border-right:1px solid #a3bcd9;border-bottom:1px solid #a3bcd9"></div>
<div style="left:439px;top:336px;width:591px;height:15px;background:#efefef"></div>
<div style="left:707px;top:336px;width:209px;height:15px;background:#ccffff"></div>
<div class="g" style="left:442px;top:336px;width:45px;height:16px;overflow:hidden;color:#000"><span class="sx">000076</span></div>
<div class="g" style="left:491px;top:336px;width:45px;height:16px;overflow:hidden;color:#000"><span class="sx">0</span></div>
<div class="g" style="left:540px;top:336px;width:125px;height:16px;overflow:hidden;color:#000"><span class="sx">TEST ADRESSE</span></div>
<div class="g" style="left:669px;top:336px;width:37px;height:16px;overflow:hidden;color:#000"><span class="sx">87000</span></div>
<div class="g" style="left:710px;top:336px;width:205px;height:16px;overflow:hidden;color:#000"><span class="sx">LIMOGES</span></div>
<div class="g" style="left:968px;top:336px;width:61px;height:16px;overflow:hidden;color:#000"><span class="sx">CAN</span></div>
<div style="left:406px;top:352px;width:33px;height:16px;background:#e3eaf6;border-right:1px solid #a3bcd9;border-bottom:1px solid #a3bcd9"></div>
<div style="left:439px;top:352px;width:591px;height:15px;background:#cc3232"></div>
<div class="g" style="left:442px;top:352px;width:45px;height:16px;overflow:hidden;color:#fff"><span class="sx">000085</span></div>
<div class="g" style="left:491px;top:352px;width:45px;height:16px;overflow:hidden;color:#fff"><span class="sx">0</span></div>
<div class="g" style="left:540px;top:352px;width:125px;height:16px;overflow:hidden;color:#fff"><span class="sx">TEST CP ADR</span></div>
<div class="g" style="left:669px;top:352px;width:37px;height:16px;overflow:hidden;color:#fff"><span class="sx">65000</span></div>
<div class="g" style="left:710px;top:352px;width:205px;height:16px;overflow:hidden;color:#fff"><span class="sx">TARBES</span></div>
<div class="g" style="left:968px;top:352px;width:61px;height:16px;overflow:hidden;color:#fff"><span class="sx">CAN</span></div>
<div style="left:406px;top:368px;width:33px;height:16px;background:#e3eaf6;border-right:1px solid #a3bcd9;border-bottom:1px solid #a3bcd9"></div>
<div style="left:439px;top:368px;width:591px;height:15px;background:#efefef"></div>
<div style="left:707px;top:368px;width:209px;height:15px;background:#ccffff"></div>
<div class="g" style="left:442px;top:368px;width:45px;height:16px;overflow:hidden;color:#000"><span class="sx">000090</span></div>
<div class="g" style="left:491px;top:368px;width:45px;height:16px;overflow:hidden;color:#000"><span class="sx">0</span></div>
<div class="g" style="left:540px;top:368px;width:125px;height:16px;overflow:hidden;color:#000"><span class="sx">TEST LBE</span></div>
<div class="g" style="left:968px;top:368px;width:61px;height:16px;overflow:hidden;color:#000"><span class="sx">CAN</span></div>
<div style="left:406px;top:384px;width:33px;height:16px;background:#e3eaf6;border-right:1px solid #a3bcd9;border-bottom:1px solid #a3bcd9"></div>
<div style="left:439px;top:384px;width:591px;height:15px;background:#fff"></div>
<div style="left:707px;top:384px;width:209px;height:15px;background:#ccffff"></div>
<div class="g" style="left:442px;top:384px;width:45px;height:16px;overflow:hidden;color:#000"><span class="sx">000093</span></div>
<div class="g" style="left:491px;top:384px;width:45px;height:16px;overflow:hidden;color:#000"><span class="sx">0</span></div>
<div class="g" style="left:540px;top:384px;width:125px;height:16px;overflow:hidden;color:#000"><span class="sx">TEST FTT</span></div>
<div class="g" style="left:968px;top:384px;width:61px;height:16px;overflow:hidden;color:#000"><span class="sx">SUD</span></div>
<div style="left:406px;top:400px;width:33px;height:16px;background:#e3eaf6;border-right:1px solid #a3bcd9;border-bottom:1px solid #a3bcd9"></div>
<div style="left:439px;top:400px;width:591px;height:15px;background:#efefef"></div>
<div style="left:707px;top:400px;width:209px;height:15px;background:#ccffff"></div>
<div class="g" style="left:442px;top:400px;width:45px;height:16px;overflow:hidden;color:#000"><span class="sx">000095</span></div>
<div class="g" style="left:491px;top:400px;width:45px;height:16px;overflow:hidden;color:#000"><span class="sx">0</span></div>
<div class="g" style="left:540px;top:400px;width:125px;height:16px;overflow:hidden;color:#000"><span class="sx">C</span></div>
<div class="g" style="left:968px;top:400px;width:61px;height:16px;overflow:hidden;color:#000"><span class="sx">SUD</span></div>
<div style="left:406px;top:416px;width:33px;height:16px;background:#e3eaf6;border-right:1px solid #a3bcd9;border-bottom:1px solid #a3bcd9"></div>
<div style="left:439px;top:416px;width:591px;height:15px;background:#fff"></div>
<div style="left:707px;top:416px;width:209px;height:15px;background:#ccffff"></div>
<div class="g" style="left:442px;top:416px;width:45px;height:16px;overflow:hidden;color:#000"><span class="sx">000096</span></div>
<div class="g" style="left:491px;top:416px;width:45px;height:16px;overflow:hidden;color:#000"><span class="sx">0</span></div>
<div class="g" style="left:540px;top:416px;width:125px;height:16px;overflow:hidden;color:#000"><span class="sx">TEST FTT</span></div>
<div class="g" style="left:968px;top:416px;width:61px;height:16px;overflow:hidden;color:#000"><span class="sx">COMTEST</span></div>
<div style="left:406px;top:432px;width:33px;height:16px;background:#e3eaf6;border-right:1px solid #a3bcd9;border-bottom:1px solid #a3bcd9"></div>
<div style="left:439px;top:432px;width:591px;height:15px;background:#efefef"></div>
<div style="left:707px;top:432px;width:209px;height:15px;background:#ccffff"></div>
<div class="g" style="left:442px;top:432px;width:45px;height:16px;overflow:hidden;color:#000"><span class="sx">000098</span></div>
<div class="g" style="left:491px;top:432px;width:45px;height:16px;overflow:hidden;color:#000"><span class="sx">0</span></div>
<div class="g" style="left:540px;top:432px;width:125px;height:16px;overflow:hidden;color:#000"><span class="sx">BENOIT MORANDET</span></div>
<div class="g" style="left:968px;top:432px;width:61px;height:16px;overflow:hidden;color:#000"><span class="sx">NORD</span></div>
<div style="left:406px;top:448px;width:33px;height:16px;background:#e3eaf6;border-right:1px solid #a3bcd9;border-bottom:1px solid #a3bcd9"></div>
<div style="left:439px;top:448px;width:591px;height:15px;background:#fff"></div>
<div style="left:707px;top:448px;width:209px;height:15px;background:#ccffff"></div>
<div class="g" style="left:442px;top:448px;width:45px;height:16px;overflow:hidden;color:#000"><span class="sx">000100</span></div>
<div class="g" style="left:491px;top:448px;width:45px;height:16px;overflow:hidden;color:#000"><span class="sx">0</span></div>
<div class="g" style="left:540px;top:448px;width:125px;height:16px;overflow:hidden;color:#000"><span class="sx">TEST FTT3</span></div>
<div class="g" style="left:968px;top:448px;width:61px;height:16px;overflow:hidden;color:#000"><span class="sx">CAN</span></div>
<div style="left:406px;top:464px;width:33px;height:16px;background:#e3eaf6;border-right:1px solid #a3bcd9;border-bottom:1px solid #a3bcd9"></div>
<div style="left:439px;top:464px;width:591px;height:15px;background:#efefef"></div>
<div style="left:707px;top:464px;width:209px;height:15px;background:#ccffff"></div>
<div class="g" style="left:442px;top:464px;width:45px;height:16px;overflow:hidden;color:#000"><span class="sx">000101</span></div>
<div class="g" style="left:491px;top:464px;width:45px;height:16px;overflow:hidden;color:#000"><span class="sx">0</span></div>
<div class="g" style="left:540px;top:464px;width:125px;height:16px;overflow:hidden;color:#000"><span class="sx">MENUISERIE DES LILAS</span></div>
<div class="g" style="left:669px;top:464px;width:37px;height:16px;overflow:hidden;color:#000"><span class="sx">65000</span></div>
<div class="g" style="left:710px;top:464px;width:205px;height:16px;overflow:hidden;color:#000"><span class="sx">TARBES</span></div>
<div class="g" style="left:968px;top:464px;width:61px;height:16px;overflow:hidden;color:#000"><span class="sx">CAN</span></div>
<div style="left:406px;top:480px;width:33px;height:16px;background:#e3eaf6;border-right:1px solid #a3bcd9;border-bottom:1px solid #a3bcd9"></div>
<div style="left:439px;top:480px;width:591px;height:15px;background:#fff"></div>
<div style="left:707px;top:480px;width:209px;height:15px;background:#ccffff"></div>
<div class="g" style="left:442px;top:480px;width:45px;height:16px;overflow:hidden;color:#000"><span class="sx">000102</span></div>
<div class="g" style="left:491px;top:480px;width:45px;height:16px;overflow:hidden;color:#000"><span class="sx">0</span></div>
<div class="g" style="left:540px;top:480px;width:125px;height:16px;overflow:hidden;color:#000"><span class="sx">MENUISERIES GAC</span></div>
<div class="g" style="left:669px;top:480px;width:37px;height:16px;overflow:hidden;color:#000"><span class="sx">01120</span></div>
<div class="g" style="left:710px;top:480px;width:205px;height:16px;overflow:hidden;color:#000"><span class="sx">MONTLUEL</span></div>
<div class="g" style="left:919px;top:480px;width:45px;height:16px;overflow:hidden;color:#000"><span class="sx">Pro</span></div>
<div class="g" style="left:968px;top:480px;width:61px;height:16px;overflow:hidden;color:#000"><span class="sx">NORD</span></div>
<div style="left:406px;top:496px;width:33px;height:16px;background:#e3eaf6;border-right:1px solid #a3bcd9;border-bottom:1px solid #a3bcd9"></div>
<div style="left:439px;top:496px;width:591px;height:15px;background:#efefef"></div>
<div style="left:707px;top:496px;width:209px;height:15px;background:#ccffff"></div>
<div class="g" style="left:442px;top:496px;width:45px;height:16px;overflow:hidden;color:#000"><span class="sx">000103</span></div>
<div class="g" style="left:491px;top:496px;width:45px;height:16px;overflow:hidden;color:#000"><span class="sx">0</span></div>
<div class="g" style="left:540px;top:496px;width:125px;height:16px;overflow:hidden;color:#000"><span class="sx">MLE</span></div>
<div class="g" style="left:669px;top:496px;width:37px;height:16px;overflow:hidden;color:#000"><span class="sx">65000</span></div>
<div class="g" style="left:710px;top:496px;width:205px;height:16px;overflow:hidden;color:#000"><span class="sx">TARBES</span></div>
<div class="g" style="left:968px;top:496px;width:61px;height:16px;overflow:hidden;color:#000"><span class="sx">COMTEST</span></div>
<div style="left:406px;top:512px;width:33px;height:16px;background:#e3eaf6;border-right:1px solid #a3bcd9;border-bottom:1px solid #a3bcd9"></div>
<div style="left:439px;top:512px;width:591px;height:15px;background:#fff"></div>
<div style="left:707px;top:512px;width:209px;height:15px;background:#ccffff"></div>
<div class="g" style="left:442px;top:512px;width:45px;height:16px;overflow:hidden;color:#000"><span class="sx">000113</span></div>
<div class="g" style="left:491px;top:512px;width:45px;height:16px;overflow:hidden;color:#000"><span class="sx">0</span></div>
<div class="g" style="left:540px;top:512px;width:125px;height:16px;overflow:hidden;color:#000"><span class="sx">C</span></div>
<div class="g" style="left:669px;top:512px;width:37px;height:16px;overflow:hidden;color:#000"><span class="sx">10200</span></div>
<div class="g" style="left:710px;top:512px;width:205px;height:16px;overflow:hidden;color:#000"><span class="sx">BAR-SUR-AUBE</span></div>
<div class="g" style="left:919px;top:512px;width:45px;height:16px;overflow:hidden;color:#000"><span class="sx">NEGO</span></div>
<div class="g" style="left:968px;top:512px;width:61px;height:16px;overflow:hidden;color:#000"><span class="sx">NORD</span></div>
<div style="left:406px;top:528px;width:33px;height:16px;background:#e3eaf6;border-right:1px solid #a3bcd9;border-bottom:1px solid #a3bcd9"></div>
<div style="left:439px;top:528px;width:591px;height:15px;background:#efefef"></div>
<div style="left:707px;top:528px;width:209px;height:15px;background:#ccffff"></div>
<div class="g" style="left:442px;top:528px;width:45px;height:16px;overflow:hidden;color:#000"><span class="sx">000119</span></div>
<div class="g" style="left:491px;top:528px;width:45px;height:16px;overflow:hidden;color:#000"><span class="sx">0</span></div>
<div class="g" style="left:540px;top:528px;width:125px;height:16px;overflow:hidden;color:#000"><span class="sx">ETS DUBOIS</span></div>
<div class="g" style="left:968px;top:528px;width:61px;height:16px;overflow:hidden;color:#000"><span class="sx">ADUPONT</span></div>
<div style="left:406px;top:544px;width:33px;height:16px;background:#e3eaf6;border-right:1px solid #a3bcd9;border-bottom:1px solid #a3bcd9"></div>
<div style="left:439px;top:544px;width:591px;height:15px;background:#fff"></div>
<div style="left:707px;top:544px;width:209px;height:15px;background:#ccffff"></div>
<div class="g" style="left:442px;top:544px;width:45px;height:16px;overflow:hidden;color:#000"><span class="sx">000123</span></div>
<div class="g" style="left:491px;top:544px;width:45px;height:16px;overflow:hidden;color:#000"><span class="sx">0</span></div>
<div class="g" style="left:540px;top:544px;width:125px;height:16px;overflow:hidden;color:#000"><span class="sx">TEST GAC</span></div>
<div class="g" style="left:968px;top:544px;width:61px;height:16px;overflow:hidden;color:#000"><span class="sx">ADUPONT</span></div>
<div style="left:406px;top:560px;width:33px;height:16px;background:#e3eaf6;border-right:1px solid #a3bcd9;border-bottom:1px solid #a3bcd9"></div>
<div style="left:439px;top:560px;width:591px;height:15px;background:#cc3232"></div>
<div class="g" style="left:442px;top:560px;width:45px;height:16px;overflow:hidden;color:#fff"><span class="sx">000124</span></div>
<div class="g" style="left:491px;top:560px;width:45px;height:16px;overflow:hidden;color:#fff"><span class="sx">0</span></div>
<div class="g" style="left:540px;top:560px;width:125px;height:16px;overflow:hidden;color:#fff"><span class="sx">TREST</span></div>
<div class="g" style="left:669px;top:560px;width:37px;height:16px;overflow:hidden;color:#fff"><span class="sx">02100</span></div>
<div class="g" style="left:710px;top:560px;width:205px;height:16px;overflow:hidden;color:#fff"><span class="sx">SAINT QUENTIN</span></div>
<div class="g" style="left:968px;top:560px;width:61px;height:16px;overflow:hidden;color:#fff"><span class="sx">ADUPONT</span></div>
<div style="left:406px;top:576px;width:33px;height:16px;background:#e3eaf6;border-right:1px solid #a3bcd9;border-bottom:1px solid #a3bcd9"></div>
<div style="left:439px;top:576px;width:591px;height:15px;background:#fff"></div>
<div style="left:707px;top:576px;width:209px;height:15px;background:#ccffff"></div>
<div class="g" style="left:442px;top:576px;width:45px;height:16px;overflow:hidden;color:#000"><span class="sx">000125</span></div>
<div class="g" style="left:491px;top:576px;width:45px;height:16px;overflow:hidden;color:#000"><span class="sx">0</span></div>
<div class="g" style="left:540px;top:576px;width:125px;height:16px;overflow:hidden;color:#000"><span class="sx">MENUISERIE JUILLANAIS</span></div>
<div class="g" style="left:669px;top:576px;width:37px;height:16px;overflow:hidden;color:#000"><span class="sx">65290</span></div>
<div class="g" style="left:710px;top:576px;width:205px;height:16px;overflow:hidden;color:#000"><span class="sx">JUILLAN</span></div>
<div class="g" style="left:968px;top:576px;width:61px;height:16px;overflow:hidden;color:#000"><span class="sx">CAN</span></div>
<div style="left:406px;top:592px;width:33px;height:16px;background:#e3eaf6;border-right:1px solid #a3bcd9;border-bottom:1px solid #a3bcd9"></div>
<div style="left:439px;top:592px;width:591px;height:15px;background:#efefef"></div>
<div style="left:707px;top:592px;width:209px;height:15px;background:#ccffff"></div>
<div class="g" style="left:442px;top:592px;width:45px;height:16px;overflow:hidden;color:#000"><span class="sx">000126</span></div>
<div class="g" style="left:491px;top:592px;width:45px;height:16px;overflow:hidden;color:#000"><span class="sx">0</span></div>
<div class="g" style="left:540px;top:592px;width:125px;height:16px;overflow:hidden;color:#000"><span class="sx">FANNY</span></div>
<div class="g" style="left:669px;top:592px;width:37px;height:16px;overflow:hidden;color:#000"><span class="sx">65290</span></div>
<div class="g" style="left:710px;top:592px;width:205px;height:16px;overflow:hidden;color:#000"><span class="sx">JUILLAN</span></div>
<div class="g" style="left:968px;top:592px;width:61px;height:16px;overflow:hidden;color:#000"><span class="sx">EST</span></div>
<div style="left:406px;top:608px;width:33px;height:16px;background:#e3eaf6;border-right:1px solid #a3bcd9;border-bottom:1px solid #a3bcd9"></div>
<div style="left:439px;top:608px;width:591px;height:15px;background:#fff"></div>
<div style="left:707px;top:608px;width:209px;height:15px;background:#ccffff"></div>
<div class="g" style="left:442px;top:608px;width:45px;height:16px;overflow:hidden;color:#000"><span class="sx">000127</span></div>
<div class="g" style="left:491px;top:608px;width:45px;height:16px;overflow:hidden;color:#000"><span class="sx">0</span></div>
<div class="g" style="left:540px;top:608px;width:125px;height:16px;overflow:hidden;color:#000"><span class="sx">MENUISERIE DE JUILLAN</span></div>
<div class="g" style="left:669px;top:608px;width:37px;height:16px;overflow:hidden;color:#000"><span class="sx">65290</span></div>
<div class="g" style="left:710px;top:608px;width:205px;height:16px;overflow:hidden;color:#000"><span class="sx">Juillan</span></div>
<div class="g" style="left:968px;top:608px;width:61px;height:16px;overflow:hidden;color:#000"><span class="sx">OUEST</span></div>
<div style="left:406px;top:624px;width:33px;height:16px;background:#e3eaf6;border-right:1px solid #a3bcd9;border-bottom:1px solid #a3bcd9"></div>
<div style="left:439px;top:624px;width:591px;height:15px;background:#efefef"></div>
<div style="left:707px;top:624px;width:209px;height:15px;background:#ccffff"></div>
<div class="g" style="left:442px;top:624px;width:45px;height:16px;overflow:hidden;color:#000"><span class="sx">000128</span></div>
<div class="g" style="left:491px;top:624px;width:45px;height:16px;overflow:hidden;color:#000"><span class="sx">0</span></div>
<div class="g" style="left:540px;top:624px;width:125px;height:16px;overflow:hidden;color:#000"><span class="sx">BIGMAT BLOIS</span></div>
<div class="g" style="left:669px;top:624px;width:37px;height:16px;overflow:hidden;color:#000"><span class="sx">01120</span></div>
<div class="g" style="left:710px;top:624px;width:205px;height:16px;overflow:hidden;color:#000"><span class="sx">MONTLUEL</span></div>
<div class="g" style="left:968px;top:624px;width:61px;height:16px;overflow:hidden;color:#000"><span class="sx">OUEST</span></div>
<div style="left:406px;top:640px;width:33px;height:16px;background:#e3eaf6;border-right:1px solid #a3bcd9;border-bottom:1px solid #a3bcd9"></div>
<div style="left:439px;top:640px;width:591px;height:15px;background:#fff"></div>
<div style="left:707px;top:640px;width:209px;height:15px;background:#ccffff"></div>
<div class="g" style="left:442px;top:640px;width:45px;height:16px;overflow:hidden;color:#000"><span class="sx">000129</span></div>
<div class="g" style="left:491px;top:640px;width:45px;height:16px;overflow:hidden;color:#000"><span class="sx">0</span></div>
<div class="g" style="left:540px;top:640px;width:125px;height:16px;overflow:hidden;color:#000"><span class="sx">MENUISERIE JUILLANAIS</span></div>
<div class="g" style="left:669px;top:640px;width:37px;height:16px;overflow:hidden;color:#000"><span class="sx">65290</span></div>
<div class="g" style="left:710px;top:640px;width:205px;height:16px;overflow:hidden;color:#000"><span class="sx">Juillan</span></div>
<div class="g" style="left:968px;top:640px;width:61px;height:16px;overflow:hidden;color:#000"><span class="sx">OUEST</span></div>
<div style="left:406px;top:656px;width:33px;height:16px;background:#e3eaf6;border-right:1px solid #a3bcd9;border-bottom:1px solid #a3bcd9"></div>
<div style="left:439px;top:656px;width:591px;height:15px;background:#efefef"></div>
<div style="left:707px;top:656px;width:209px;height:15px;background:#ccffff"></div>
<div class="g" style="left:442px;top:656px;width:45px;height:16px;overflow:hidden;color:#000"><span class="sx">000130</span></div>
<div class="g" style="left:491px;top:656px;width:45px;height:16px;overflow:hidden;color:#000"><span class="sx">0</span></div>
<div class="g" style="left:540px;top:656px;width:125px;height:16px;overflow:hidden;color:#000"><span class="sx">ROBERT ALEXANDRE EN</span></div>
<div class="g" style="left:669px;top:656px;width:37px;height:16px;overflow:hidden;color:#000"><span class="sx">44420</span></div>
<div class="g" style="left:710px;top:656px;width:205px;height:16px;overflow:hidden;color:#000"><span class="sx">PIRIAC SUR MER</span></div>
<div class="g" style="left:968px;top:656px;width:61px;height:16px;overflow:hidden;color:#000"><span class="sx">EST</span></div>
<div style="left:406px;top:672px;width:33px;height:16px;background:#e3eaf6;border-right:1px solid #a3bcd9;border-bottom:1px solid #a3bcd9"></div>
<div style="left:439px;top:672px;width:591px;height:15px;background:#fff"></div>
<div style="left:707px;top:672px;width:209px;height:15px;background:#ccffff"></div>
<div class="g" style="left:442px;top:672px;width:45px;height:16px;overflow:hidden;color:#000"><span class="sx">000131</span></div>
<div class="g" style="left:491px;top:672px;width:45px;height:16px;overflow:hidden;color:#000"><span class="sx">0</span></div>
<div class="g" style="left:540px;top:672px;width:125px;height:16px;overflow:hidden;color:#000"><span class="sx">TEST GAC 5</span></div>
<div class="g" style="left:968px;top:672px;width:61px;height:16px;overflow:hidden;color:#000"><span class="sx">ADUPONT</span></div>
<div style="left:406px;top:688px;width:33px;height:16px;background:#e3eaf6;border-right:1px solid #a3bcd9;border-bottom:1px solid #a3bcd9"></div>
<div style="left:439px;top:688px;width:591px;height:15px;background:#efefef"></div>
<div style="left:707px;top:688px;width:209px;height:15px;background:#ccffff"></div>
<div class="g" style="left:442px;top:688px;width:45px;height:16px;overflow:hidden;color:#000"><span class="sx">GAC1</span></div>
<div class="g" style="left:491px;top:688px;width:45px;height:16px;overflow:hidden;color:#000"><span class="sx">0</span></div>
<div class="g" style="left:540px;top:688px;width:125px;height:16px;overflow:hidden;color:#000"><span class="sx">BIGMAT BLOIS</span></div>
<div class="g" style="left:669px;top:688px;width:37px;height:16px;overflow:hidden;color:#000"><span class="sx">01120</span></div>
<div class="g" style="left:710px;top:688px;width:205px;height:16px;overflow:hidden;color:#000"><span class="sx">MONTLUEL</span></div>
<div class="g" style="left:919px;top:688px;width:45px;height:16px;overflow:hidden;color:#000"><span class="sx">AMOB</span></div>
<div class="g" style="left:968px;top:688px;width:61px;height:16px;overflow:hidden;color:#000"><span class="sx">NORD</span></div>
<div style="left:406px;top:704px;width:33px;height:16px;background:#e3eaf6;border-right:1px solid #a3bcd9;border-bottom:1px solid #a3bcd9"></div>
<div style="left:439px;top:704px;width:591px;height:15px;background:#fff"></div>
<div style="left:707px;top:704px;width:209px;height:15px;background:#ccffff"></div>
<div class="g" style="left:442px;top:704px;width:45px;height:16px;overflow:hidden;color:#000"><span class="sx">GAC2</span></div>
<div class="g" style="left:491px;top:704px;width:45px;height:16px;overflow:hidden;color:#000"><span class="sx">0</span></div>
<div class="g" style="left:540px;top:704px;width:125px;height:16px;overflow:hidden;color:#000"><span class="sx">BIGMAT BLOIS</span></div>
<div class="g" style="left:669px;top:704px;width:37px;height:16px;overflow:hidden;color:#000"><span class="sx">01120</span></div>
<div class="g" style="left:710px;top:704px;width:205px;height:16px;overflow:hidden;color:#000"><span class="sx">MONTLUEL</span></div>
<div class="g" style="left:919px;top:704px;width:45px;height:16px;overflow:hidden;color:#000"><span class="sx">AMOB</span></div>
<div class="g" style="left:968px;top:704px;width:61px;height:16px;overflow:hidden;color:#000"><span class="sx">TEST</span></div>
<div style="left:406px;top:720px;width:33px;height:16px;background:#e3eaf6;border-right:1px solid #a3bcd9;border-bottom:1px solid #a3bcd9"></div>
<div style="left:439px;top:720px;width:591px;height:15px;background:#efefef"></div>
<div style="left:707px;top:720px;width:209px;height:15px;background:#ccffff"></div>
<div class="g" style="left:442px;top:720px;width:45px;height:16px;overflow:hidden;color:#000"><span class="sx">000001</span></div>
<div class="g" style="left:491px;top:720px;width:45px;height:16px;overflow:hidden;color:#000"><span class="sx">01</span></div>
<div class="g" style="left:540px;top:720px;width:125px;height:16px;overflow:hidden;color:#000"><span class="sx">MAISONS D'EN FRANCE</span></div>
<div class="g" style="left:669px;top:720px;width:37px;height:16px;overflow:hidden;color:#000"><span class="sx">65000</span></div>
<div class="g" style="left:710px;top:720px;width:205px;height:16px;overflow:hidden;color:#000"><span class="sx">TARBES</span></div>
<div class="g" style="left:968px;top:720px;width:61px;height:16px;overflow:hidden;color:#000"><span class="sx">COMTEST</span></div>
<div style="left:406px;top:736px;width:33px;height:16px;background:#e3eaf6;border-right:1px solid #a3bcd9;border-bottom:1px solid #a3bcd9"></div>
<div style="left:439px;top:736px;width:591px;height:15px;background:#fff"></div>
<div style="left:707px;top:736px;width:209px;height:15px;background:#ccffff"></div>
<div class="g" style="left:442px;top:736px;width:45px;height:16px;overflow:hidden;color:#000"><span class="sx">000002</span></div>
<div class="g" style="left:491px;top:736px;width:45px;height:16px;overflow:hidden;color:#000"><span class="sx">01</span></div>
<div class="g" style="left:540px;top:736px;width:125px;height:16px;overflow:hidden;color:#000"><span class="sx">MAISONS D'EN FRANCE</span></div>
<div class="g" style="left:669px;top:736px;width:37px;height:16px;overflow:hidden;color:#000"><span class="sx">13090</span></div>
<div class="g" style="left:710px;top:736px;width:205px;height:16px;overflow:hidden;color:#000"><span class="sx">Aix-en-provence</span></div>
<div class="g" style="left:968px;top:736px;width:61px;height:16px;overflow:hidden;color:#000"><span class="sx">SUD</span></div>
<div style="left:406px;top:752px;width:33px;height:16px;background:#e3eaf6;border-right:1px solid #a3bcd9;border-bottom:1px solid #a3bcd9"></div>
<div style="left:439px;top:752px;width:591px;height:15px;background:#cc3232"></div>
<div class="g" style="left:442px;top:752px;width:45px;height:16px;overflow:hidden;color:#fff"><span class="sx">000003</span></div>
<div class="g" style="left:491px;top:752px;width:45px;height:16px;overflow:hidden;color:#fff"><span class="sx">01</span></div>
<div class="g" style="left:540px;top:752px;width:125px;height:16px;overflow:hidden;color:#fff"><span class="sx">BIGMAT CAEN</span></div>
<div class="g" style="left:669px;top:752px;width:37px;height:16px;overflow:hidden;color:#fff"><span class="sx">47550</span></div>
<div class="g" style="left:710px;top:752px;width:205px;height:16px;overflow:hidden;color:#fff"><span class="sx">BOE</span></div>
<div class="g" style="left:919px;top:752px;width:45px;height:16px;overflow:hidden;color:#fff"><span class="sx">Pro</span></div>
<div class="g" style="left:968px;top:752px;width:61px;height:16px;overflow:hidden;color:#fff"><span class="sx">OUEST</span></div>
<div style="left:406px;top:768px;width:33px;height:16px;background:#e3eaf6;border-right:1px solid #a3bcd9;border-bottom:1px solid #a3bcd9"></div>
<div style="left:439px;top:768px;width:591px;height:15px;background:#fff"></div>
<div style="left:707px;top:768px;width:209px;height:15px;background:#ccffff"></div>
<div class="g" style="left:442px;top:768px;width:45px;height:16px;overflow:hidden;color:#000"><span class="sx">000004</span></div>
<div class="g" style="left:491px;top:768px;width:45px;height:16px;overflow:hidden;color:#000"><span class="sx">01</span></div>
<div class="g" style="left:540px;top:768px;width:125px;height:16px;overflow:hidden;color:#000"><span class="sx">BIGMAT SIEGE</span></div>
<div class="g" style="left:669px;top:768px;width:37px;height:16px;overflow:hidden;color:#000"><span class="sx">65000</span></div>
<div class="g" style="left:710px;top:768px;width:205px;height:16px;overflow:hidden;color:#000"><span class="sx">Tarbes</span></div>
<div class="g" style="left:919px;top:768px;width:45px;height:16px;overflow:hidden;color:#000"><span class="sx">Pro</span></div>
<div style="left:406px;top:784px;width:33px;height:16px;background:#e3eaf6;border-right:1px solid #a3bcd9;border-bottom:1px solid #a3bcd9"></div>
<div style="left:439px;top:784px;width:591px;height:15px;background:#efefef"></div>
<div style="left:707px;top:784px;width:209px;height:15px;background:#ccffff"></div>
<div class="g" style="left:442px;top:784px;width:45px;height:16px;overflow:hidden;color:#000"><span class="sx">000005</span></div>
<div class="g" style="left:491px;top:784px;width:45px;height:16px;overflow:hidden;color:#000"><span class="sx">01</span></div>
<div class="g" style="left:540px;top:784px;width:125px;height:16px;overflow:hidden;color:#000"><span class="sx">BIGMAT BROU</span></div>
<div class="g" style="left:669px;top:784px;width:37px;height:16px;overflow:hidden;color:#000"><span class="sx">28160</span></div>
<div class="g" style="left:710px;top:784px;width:205px;height:16px;overflow:hidden;color:#000"><span class="sx">BROU</span></div>
<div class="g" style="left:919px;top:784px;width:45px;height:16px;overflow:hidden;color:#000"><span class="sx">Pro</span></div>
<div class="g" style="left:968px;top:784px;width:61px;height:16px;overflow:hidden;color:#000"><span class="sx">NORD</span></div>
<div style="left:406px;top:800px;width:33px;height:16px;background:#e3eaf6;border-right:1px solid #a3bcd9;border-bottom:1px solid #a3bcd9"></div>
<div style="left:439px;top:800px;width:591px;height:15px;background:#fff"></div>
<div style="left:707px;top:800px;width:209px;height:15px;background:#ccffff"></div>
<div class="g" style="left:442px;top:800px;width:45px;height:16px;overflow:hidden;color:#000"><span class="sx">000006</span></div>
<div class="g" style="left:491px;top:800px;width:45px;height:16px;overflow:hidden;color:#000"><span class="sx">01</span></div>
<div class="g" style="left:540px;top:800px;width:125px;height:16px;overflow:hidden;color:#000"><span class="sx">BIGMAT CANY</span></div>
<div class="g" style="left:669px;top:800px;width:37px;height:16px;overflow:hidden;color:#000"><span class="sx">64000</span></div>
<div class="g" style="left:710px;top:800px;width:205px;height:16px;overflow:hidden;color:#000"><span class="sx">PAU</span></div>
<div class="g" style="left:919px;top:800px;width:45px;height:16px;overflow:hidden;color:#000"><span class="sx">Pro</span></div>
<div class="g" style="left:968px;top:800px;width:61px;height:16px;overflow:hidden;color:#000"><span class="sx">NORD</span></div>
<div style="left:406px;top:816px;width:33px;height:16px;background:#e3eaf6;border-right:1px solid #a3bcd9;border-bottom:1px solid #a3bcd9"></div>
<div style="left:439px;top:816px;width:591px;height:15px;background:#cc3232"></div>
<div class="g" style="left:442px;top:816px;width:45px;height:16px;overflow:hidden;color:#fff"><span class="sx">000007</span></div>
<div class="g" style="left:491px;top:816px;width:45px;height:16px;overflow:hidden;color:#fff"><span class="sx">01</span></div>
<div class="g" style="left:540px;top:816px;width:125px;height:16px;overflow:hidden;color:#fff"><span class="sx">BIGMAT AUCH</span></div>
<div class="g" style="left:669px;top:816px;width:37px;height:16px;overflow:hidden;color:#fff"><span class="sx">32000</span></div>
<div class="g" style="left:710px;top:816px;width:205px;height:16px;overflow:hidden;color:#fff"><span class="sx">AUCH</span></div>
<div class="g" style="left:919px;top:816px;width:45px;height:16px;overflow:hidden;color:#fff"><span class="sx">Pro</span></div>
<div class="g" style="left:968px;top:816px;width:61px;height:16px;overflow:hidden;color:#fff"><span class="sx">SUD</span></div>
<div style="left:406px;top:832px;width:33px;height:16px;background:#e3eaf6;border-right:1px solid #a3bcd9;border-bottom:1px solid #a3bcd9"></div>
<div style="left:439px;top:832px;width:591px;height:15px;background:#fff"></div>
<div style="left:707px;top:832px;width:209px;height:15px;background:#ccffff"></div>
<div class="g" style="left:442px;top:832px;width:45px;height:16px;overflow:hidden;color:#000"><span class="sx">000008</span></div>
<div class="g" style="left:491px;top:832px;width:45px;height:16px;overflow:hidden;color:#000"><span class="sx">01</span></div>
<div class="g" style="left:540px;top:832px;width:125px;height:16px;overflow:hidden;color:#000"><span class="sx">BIGMAT CAUDEBEC</span></div>
<div class="g" style="left:669px;top:832px;width:37px;height:16px;overflow:hidden;color:#000"><span class="sx">76320</span></div>
<div class="g" style="left:710px;top:832px;width:205px;height:16px;overflow:hidden;color:#000"><span class="sx">Caudebec-lès-Elbeuf</span></div>
<div class="g" style="left:919px;top:832px;width:45px;height:16px;overflow:hidden;color:#000"><span class="sx">Pro</span></div>
<div class="g" style="left:968px;top:832px;width:61px;height:16px;overflow:hidden;color:#000"><span class="sx">NORD</span></div>
<div style="left:406px;top:848px;width:33px;height:16px;background:#e3eaf6;border-right:1px solid #a3bcd9;border-bottom:1px solid #a3bcd9"></div>
<div style="left:439px;top:848px;width:591px;height:15px;background:#cc3232"></div>
<div class="g" style="left:442px;top:848px;width:45px;height:16px;overflow:hidden;color:#fff"><span class="sx">000009</span></div>
<div class="g" style="left:491px;top:848px;width:45px;height:16px;overflow:hidden;color:#fff"><span class="sx">01</span></div>
<div class="g" style="left:540px;top:848px;width:125px;height:16px;overflow:hidden;color:#fff"><span class="sx">BIGMAT AYTRE</span></div>
<div class="g" style="left:669px;top:848px;width:37px;height:16px;overflow:hidden;color:#fff"><span class="sx">17440</span></div>
<div class="g" style="left:710px;top:848px;width:205px;height:16px;overflow:hidden;color:#fff"><span class="sx">Aytre</span></div>
<div class="g" style="left:919px;top:848px;width:45px;height:16px;overflow:hidden;color:#fff"><span class="sx">Pro</span></div>
<div class="g" style="left:968px;top:848px;width:61px;height:16px;overflow:hidden;color:#fff"><span class="sx">OUEST</span></div>
<div style="left:406px;top:864px;width:33px;height:16px;background:#e3eaf6;border-right:1px solid #a3bcd9;border-bottom:1px solid #a3bcd9"></div>
<div style="left:439px;top:864px;width:591px;height:15px;background:#cc3232"></div>
<div class="g" style="left:442px;top:864px;width:45px;height:16px;overflow:hidden;color:#fff"><span class="sx">000010</span></div>
<div class="g" style="left:491px;top:864px;width:45px;height:16px;overflow:hidden;color:#fff"><span class="sx">01</span></div>
<div class="g" style="left:540px;top:864px;width:125px;height:16px;overflow:hidden;color:#fff"><span class="sx">BIGMAT CHAMBLY BROU</span></div>
<div class="g" style="left:669px;top:864px;width:37px;height:16px;overflow:hidden;color:#fff"><span class="sx">65000</span></div>
<div class="g" style="left:710px;top:864px;width:205px;height:16px;overflow:hidden;color:#fff"><span class="sx">TARBES</span></div>
<div class="g" style="left:919px;top:864px;width:45px;height:16px;overflow:hidden;color:#fff"><span class="sx">Pro</span></div>
<div class="g" style="left:968px;top:864px;width:61px;height:16px;overflow:hidden;color:#fff"><span class="sx">NORD</span></div>
<div style="left:406px;top:880px;width:33px;height:16px;background:#e3eaf6;border-right:1px solid #a3bcd9;border-bottom:1px solid #a3bcd9"></div>
<div style="left:439px;top:880px;width:591px;height:15px;background:#cc3232"></div>
<div class="g" style="left:442px;top:880px;width:45px;height:16px;overflow:hidden;color:#fff"><span class="sx">000011</span></div>
<div class="g" style="left:491px;top:880px;width:45px;height:16px;overflow:hidden;color:#fff"><span class="sx">01</span></div>
<div class="g" style="left:540px;top:880px;width:125px;height:16px;overflow:hidden;color:#fff"><span class="sx">BIGMAT BATAILLE BRETEUIL</span></div>
<div class="g" style="left:669px;top:880px;width:37px;height:16px;overflow:hidden;color:#fff"><span class="sx">27160</span></div>
<div class="g" style="left:710px;top:880px;width:205px;height:16px;overflow:hidden;color:#fff"><span class="sx">BRETEUIL</span></div>
<div class="g" style="left:919px;top:880px;width:45px;height:16px;overflow:hidden;color:#fff"><span class="sx">Pro</span></div>
<div class="g" style="left:968px;top:880px;width:61px;height:16px;overflow:hidden;color:#fff"><span class="sx">NORD</span></div>
<div style="left:406px;top:896px;width:33px;height:16px;background:#e3eaf6;border-right:1px solid #a3bcd9;border-bottom:1px solid #a3bcd9"></div>
<div style="left:439px;top:896px;width:591px;height:15px;background:#fff"></div>
<div style="left:707px;top:896px;width:209px;height:15px;background:#ccffff"></div>
<div class="g" style="left:442px;top:896px;width:45px;height:16px;overflow:hidden;color:#000"><span class="sx">000012</span></div>
<div class="g" style="left:491px;top:896px;width:45px;height:16px;overflow:hidden;color:#000"><span class="sx">01</span></div>
<div class="g" style="left:540px;top:896px;width:125px;height:16px;overflow:hidden;color:#000"><span class="sx">BIGMAT BATAILLE LISIEUX</span></div>
<div class="g" style="left:669px;top:896px;width:37px;height:16px;overflow:hidden;color:#000"><span class="sx">14100</span></div>
<div class="g" style="left:710px;top:896px;width:205px;height:16px;overflow:hidden;color:#000"><span class="sx">Lisieux</span></div>
<div class="g" style="left:919px;top:896px;width:45px;height:16px;overflow:hidden;color:#000"><span class="sx">Pro</span></div>
<div class="g" style="left:968px;top:896px;width:61px;height:16px;overflow:hidden;color:#000"><span class="sx">NORD</span></div>
<div style="left:406px;top:912px;width:33px;height:16px;background:#e3eaf6;border-right:1px solid #a3bcd9;border-bottom:1px solid #a3bcd9"></div>
<div style="left:439px;top:912px;width:591px;height:15px;background:#cc3232"></div>
<div class="g" style="left:442px;top:912px;width:45px;height:16px;overflow:hidden;color:#fff"><span class="sx">000013</span></div>
<div class="g" style="left:491px;top:912px;width:45px;height:16px;overflow:hidden;color:#fff"><span class="sx">01</span></div>
<div class="g" style="left:540px;top:912px;width:125px;height:16px;overflow:hidden;color:#fff"><span class="sx">BIGMAT CHAMPAGNE-LES</span></div>
<div class="g" style="left:669px;top:912px;width:37px;height:16px;overflow:hidden;color:#fff"><span class="sx">85450</span></div>
<div class="g" style="left:710px;top:912px;width:205px;height:16px;overflow:hidden;color:#fff"><span class="sx">CHAMPAGNE-LES-MARAIS</span></div>
<div class="g" style="left:919px;top:912px;width:45px;height:16px;overflow:hidden;color:#fff"><span class="sx">Pro</span></div>
<div class="g" style="left:968px;top:912px;width:61px;height:16px;overflow:hidden;color:#fff"><span class="sx">OUEST</span></div>
<div style="left:406px;top:928px;width:33px;height:16px;background:#e3eaf6;border-right:1px solid #a3bcd9;border-bottom:1px solid #a3bcd9"></div>
<div style="left:439px;top:928px;width:591px;height:15px;background:#cc3232"></div>
<div class="g" style="left:442px;top:928px;width:45px;height:16px;overflow:hidden;color:#fff"><span class="sx">000014</span></div>
<div class="g" style="left:491px;top:928px;width:45px;height:16px;overflow:hidden;color:#fff"><span class="sx">01</span></div>
<div class="g" style="left:540px;top:928px;width:125px;height:16px;overflow:hidden;color:#fff"><span class="sx">BIGMAT CHATEAUNEUF</span></div>
<div class="g" style="left:669px;top:928px;width:37px;height:16px;overflow:hidden;color:#fff"><span class="sx">45110</span></div>
<div class="g" style="left:710px;top:928px;width:205px;height:16px;overflow:hidden;color:#fff"><span class="sx">CHATEAUNEUF-SUR-LOIRE</span></div>
<div class="g" style="left:919px;top:928px;width:45px;height:16px;overflow:hidden;color:#fff"><span class="sx">Pro</span></div>
<div class="g" style="left:968px;top:928px;width:61px;height:16px;overflow:hidden;color:#fff"><span class="sx">NORD</span></div>
<div style="left:406px;top:944px;width:33px;height:16px;background:#e3eaf6;border-right:1px solid #a3bcd9;border-bottom:1px solid #a3bcd9"></div>
<div style="left:439px;top:944px;width:591px;height:15px;background:#efefef"></div>
<div style="left:707px;top:944px;width:209px;height:15px;background:#ccffff"></div>
<div class="g" style="left:442px;top:944px;width:45px;height:16px;overflow:hidden;color:#000"><span class="sx">000015</span></div>
<div class="g" style="left:491px;top:944px;width:45px;height:16px;overflow:hidden;color:#000"><span class="sx">01</span></div>
<div class="g" style="left:540px;top:944px;width:125px;height:16px;overflow:hidden;color:#000"><span class="sx">BIGMAT CONDOM</span></div>
<div class="g" style="left:669px;top:944px;width:37px;height:16px;overflow:hidden;color:#000"><span class="sx">32100</span></div>
<div class="g" style="left:710px;top:944px;width:205px;height:16px;overflow:hidden;color:#000"><span class="sx">CONDOM</span></div>
<div class="g" style="left:919px;top:944px;width:45px;height:16px;overflow:hidden;color:#000"><span class="sx">Pro</span></div>
<div class="g" style="left:968px;top:944px;width:61px;height:16px;overflow:hidden;color:#000"><span class="sx">SUD</span></div>
<div style="left:406px;top:960px;width:33px;height:16px;background:#e3eaf6;border-right:1px solid #a3bcd9;border-bottom:1px solid #a3bcd9"></div>
<div style="left:439px;top:960px;width:591px;height:15px;background:#fff"></div>
<div style="left:707px;top:960px;width:209px;height:15px;background:#ccffff"></div>
<div class="g" style="left:442px;top:960px;width:45px;height:16px;overflow:hidden;color:#000"><span class="sx">000016</span></div>
<div class="g" style="left:491px;top:960px;width:45px;height:16px;overflow:hidden;color:#000"><span class="sx">01</span></div>
<div class="g" style="left:540px;top:960px;width:125px;height:16px;overflow:hidden;color:#000"><span class="sx">BIGMAT BAULE</span></div>
<div class="g" style="left:669px;top:960px;width:37px;height:16px;overflow:hidden;color:#000"><span class="sx">45130</span></div>
<div class="g" style="left:710px;top:960px;width:205px;height:16px;overflow:hidden;color:#000"><span class="sx">BAULE</span></div>
<div class="g" style="left:968px;top:960px;width:61px;height:16px;overflow:hidden;color:#000"><span class="sx">NORD</span></div>
<div style="left:406px;top:976px;width:33px;height:16px;background:#e3eaf6;border-right:1px solid #a3bcd9;border-bottom:1px solid #a3bcd9"></div>
<div style="left:439px;top:976px;width:591px;height:15px;background:#cc3232"></div>
<div class="g" style="left:442px;top:976px;width:45px;height:16px;overflow:hidden;color:#fff"><span class="sx">000017</span></div>
<div class="g" style="left:491px;top:976px;width:45px;height:16px;overflow:hidden;color:#fff"><span class="sx">01</span></div>
<div class="g" style="left:540px;top:976px;width:125px;height:16px;overflow:hidden;color:#fff"><span class="sx">BIGMAT COUSANCE</span></div>
<div class="g" style="left:669px;top:976px;width:37px;height:16px;overflow:hidden;color:#fff"><span class="sx">39190</span></div>
<div class="g" style="left:710px;top:976px;width:205px;height:16px;overflow:hidden;color:#fff"><span class="sx">COUSANCE</span></div>
<div class="g" style="left:919px;top:976px;width:45px;height:16px;overflow:hidden;color:#fff"><span class="sx">PART</span></div>
<div class="g" style="left:968px;top:976px;width:61px;height:16px;overflow:hidden;color:#fff"><span class="sx">OUEST</span></div>
<div style="left:487px;top:224px;width:1px;height:768px;background:repeating-linear-gradient(#b4b4b4 0 1px,transparent 1px 2px);opacity:.8"></div>
<div style="left:536px;top:224px;width:1px;height:768px;background:repeating-linear-gradient(#b4b4b4 0 1px,transparent 1px 2px);opacity:.8"></div>
<div style="left:665px;top:224px;width:1px;height:768px;background:repeating-linear-gradient(#b4b4b4 0 1px,transparent 1px 2px);opacity:.8"></div>
<div style="left:706px;top:224px;width:1px;height:768px;background:repeating-linear-gradient(#b4b4b4 0 1px,transparent 1px 2px);opacity:.8"></div>
<div style="left:915px;top:224px;width:1px;height:768px;background:repeating-linear-gradient(#b4b4b4 0 1px,transparent 1px 2px);opacity:.8"></div>
<div style="left:964px;top:224px;width:1px;height:768px;background:repeating-linear-gradient(#b4b4b4 0 1px,transparent 1px 2px);opacity:.8"></div>
<div style="left:1029px;top:224px;width:1px;height:768px;background:#a0a0a0"></div>
<div style="left:487px;top:288px;width:1px;height:15px;background:repeating-linear-gradient(#fff 0 1px,transparent 1px 2px)"></div>
<div style="left:536px;top:288px;width:1px;height:15px;background:repeating-linear-gradient(#fff 0 1px,transparent 1px 2px)"></div>
<div style="left:665px;top:288px;width:1px;height:15px;background:repeating-linear-gradient(#fff 0 1px,transparent 1px 2px)"></div>
<div style="left:706px;top:288px;width:1px;height:15px;background:repeating-linear-gradient(#fff 0 1px,transparent 1px 2px)"></div>
<div style="left:915px;top:288px;width:1px;height:15px;background:repeating-linear-gradient(#fff 0 1px,transparent 1px 2px)"></div>
<div style="left:964px;top:288px;width:1px;height:15px;background:repeating-linear-gradient(#fff 0 1px,transparent 1px 2px)"></div>
<div style="left:487px;top:352px;width:1px;height:15px;background:repeating-linear-gradient(#fff 0 1px,transparent 1px 2px)"></div>
<div style="left:536px;top:352px;width:1px;height:15px;background:repeating-linear-gradient(#fff 0 1px,transparent 1px 2px)"></div>
<div style="left:665px;top:352px;width:1px;height:15px;background:repeating-linear-gradient(#fff 0 1px,transparent 1px 2px)"></div>
<div style="left:706px;top:352px;width:1px;height:15px;background:repeating-linear-gradient(#fff 0 1px,transparent 1px 2px)"></div>
<div style="left:915px;top:352px;width:1px;height:15px;background:repeating-linear-gradient(#fff 0 1px,transparent 1px 2px)"></div>
<div style="left:964px;top:352px;width:1px;height:15px;background:repeating-linear-gradient(#fff 0 1px,transparent 1px 2px)"></div>
<div style="left:487px;top:560px;width:1px;height:15px;background:repeating-linear-gradient(#fff 0 1px,transparent 1px 2px)"></div>
<div style="left:536px;top:560px;width:1px;height:15px;background:repeating-linear-gradient(#fff 0 1px,transparent 1px 2px)"></div>
<div style="left:665px;top:560px;width:1px;height:15px;background:repeating-linear-gradient(#fff 0 1px,transparent 1px 2px)"></div>
<div style="left:706px;top:560px;width:1px;height:15px;background:repeating-linear-gradient(#fff 0 1px,transparent 1px 2px)"></div>
<div style="left:915px;top:560px;width:1px;height:15px;background:repeating-linear-gradient(#fff 0 1px,transparent 1px 2px)"></div>
<div style="left:964px;top:560px;width:1px;height:15px;background:repeating-linear-gradient(#fff 0 1px,transparent 1px 2px)"></div>
<div style="left:487px;top:752px;width:1px;height:15px;background:repeating-linear-gradient(#fff 0 1px,transparent 1px 2px)"></div>
<div style="left:536px;top:752px;width:1px;height:15px;background:repeating-linear-gradient(#fff 0 1px,transparent 1px 2px)"></div>
<div style="left:665px;top:752px;width:1px;height:15px;background:repeating-linear-gradient(#fff 0 1px,transparent 1px 2px)"></div>
<div style="left:706px;top:752px;width:1px;height:15px;background:repeating-linear-gradient(#fff 0 1px,transparent 1px 2px)"></div>
<div style="left:915px;top:752px;width:1px;height:15px;background:repeating-linear-gradient(#fff 0 1px,transparent 1px 2px)"></div>
<div style="left:964px;top:752px;width:1px;height:15px;background:repeating-linear-gradient(#fff 0 1px,transparent 1px 2px)"></div>
<div style="left:487px;top:816px;width:1px;height:15px;background:repeating-linear-gradient(#fff 0 1px,transparent 1px 2px)"></div>
<div style="left:536px;top:816px;width:1px;height:15px;background:repeating-linear-gradient(#fff 0 1px,transparent 1px 2px)"></div>
<div style="left:665px;top:816px;width:1px;height:15px;background:repeating-linear-gradient(#fff 0 1px,transparent 1px 2px)"></div>
<div style="left:706px;top:816px;width:1px;height:15px;background:repeating-linear-gradient(#fff 0 1px,transparent 1px 2px)"></div>
<div style="left:915px;top:816px;width:1px;height:15px;background:repeating-linear-gradient(#fff 0 1px,transparent 1px 2px)"></div>
<div style="left:964px;top:816px;width:1px;height:15px;background:repeating-linear-gradient(#fff 0 1px,transparent 1px 2px)"></div>
<div style="left:487px;top:848px;width:1px;height:15px;background:repeating-linear-gradient(#fff 0 1px,transparent 1px 2px)"></div>
<div style="left:536px;top:848px;width:1px;height:15px;background:repeating-linear-gradient(#fff 0 1px,transparent 1px 2px)"></div>
<div style="left:665px;top:848px;width:1px;height:15px;background:repeating-linear-gradient(#fff 0 1px,transparent 1px 2px)"></div>
<div style="left:706px;top:848px;width:1px;height:15px;background:repeating-linear-gradient(#fff 0 1px,transparent 1px 2px)"></div>
<div style="left:915px;top:848px;width:1px;height:15px;background:repeating-linear-gradient(#fff 0 1px,transparent 1px 2px)"></div>
<div style="left:964px;top:848px;width:1px;height:15px;background:repeating-linear-gradient(#fff 0 1px,transparent 1px 2px)"></div>
<div style="left:487px;top:864px;width:1px;height:15px;background:repeating-linear-gradient(#fff 0 1px,transparent 1px 2px)"></div>
<div style="left:536px;top:864px;width:1px;height:15px;background:repeating-linear-gradient(#fff 0 1px,transparent 1px 2px)"></div>
<div style="left:665px;top:864px;width:1px;height:15px;background:repeating-linear-gradient(#fff 0 1px,transparent 1px 2px)"></div>
<div style="left:706px;top:864px;width:1px;height:15px;background:repeating-linear-gradient(#fff 0 1px,transparent 1px 2px)"></div>
<div style="left:915px;top:864px;width:1px;height:15px;background:repeating-linear-gradient(#fff 0 1px,transparent 1px 2px)"></div>
<div style="left:964px;top:864px;width:1px;height:15px;background:repeating-linear-gradient(#fff 0 1px,transparent 1px 2px)"></div>
<div style="left:487px;top:880px;width:1px;height:15px;background:repeating-linear-gradient(#fff 0 1px,transparent 1px 2px)"></div>
<div style="left:536px;top:880px;width:1px;height:15px;background:repeating-linear-gradient(#fff 0 1px,transparent 1px 2px)"></div>
<div style="left:665px;top:880px;width:1px;height:15px;background:repeating-linear-gradient(#fff 0 1px,transparent 1px 2px)"></div>
<div style="left:706px;top:880px;width:1px;height:15px;background:repeating-linear-gradient(#fff 0 1px,transparent 1px 2px)"></div>
<div style="left:915px;top:880px;width:1px;height:15px;background:repeating-linear-gradient(#fff 0 1px,transparent 1px 2px)"></div>
<div style="left:964px;top:880px;width:1px;height:15px;background:repeating-linear-gradient(#fff 0 1px,transparent 1px 2px)"></div>
<div style="left:487px;top:912px;width:1px;height:15px;background:repeating-linear-gradient(#fff 0 1px,transparent 1px 2px)"></div>
<div style="left:536px;top:912px;width:1px;height:15px;background:repeating-linear-gradient(#fff 0 1px,transparent 1px 2px)"></div>
<div style="left:665px;top:912px;width:1px;height:15px;background:repeating-linear-gradient(#fff 0 1px,transparent 1px 2px)"></div>
<div style="left:706px;top:912px;width:1px;height:15px;background:repeating-linear-gradient(#fff 0 1px,transparent 1px 2px)"></div>
<div style="left:915px;top:912px;width:1px;height:15px;background:repeating-linear-gradient(#fff 0 1px,transparent 1px 2px)"></div>
<div style="left:964px;top:912px;width:1px;height:15px;background:repeating-linear-gradient(#fff 0 1px,transparent 1px 2px)"></div>
<div style="left:487px;top:928px;width:1px;height:15px;background:repeating-linear-gradient(#fff 0 1px,transparent 1px 2px)"></div>
<div style="left:536px;top:928px;width:1px;height:15px;background:repeating-linear-gradient(#fff 0 1px,transparent 1px 2px)"></div>
<div style="left:665px;top:928px;width:1px;height:15px;background:repeating-linear-gradient(#fff 0 1px,transparent 1px 2px)"></div>
<div style="left:706px;top:928px;width:1px;height:15px;background:repeating-linear-gradient(#fff 0 1px,transparent 1px 2px)"></div>
<div style="left:915px;top:928px;width:1px;height:15px;background:repeating-linear-gradient(#fff 0 1px,transparent 1px 2px)"></div>
<div style="left:964px;top:928px;width:1px;height:15px;background:repeating-linear-gradient(#fff 0 1px,transparent 1px 2px)"></div>
<div style="left:487px;top:976px;width:1px;height:15px;background:repeating-linear-gradient(#fff 0 1px,transparent 1px 2px)"></div>
<div style="left:536px;top:976px;width:1px;height:15px;background:repeating-linear-gradient(#fff 0 1px,transparent 1px 2px)"></div>
<div style="left:665px;top:976px;width:1px;height:15px;background:repeating-linear-gradient(#fff 0 1px,transparent 1px 2px)"></div>
<div style="left:706px;top:976px;width:1px;height:15px;background:repeating-linear-gradient(#fff 0 1px,transparent 1px 2px)"></div>
<div style="left:915px;top:976px;width:1px;height:15px;background:repeating-linear-gradient(#fff 0 1px,transparent 1px 2px)"></div>
<div style="left:964px;top:976px;width:1px;height:15px;background:repeating-linear-gradient(#fff 0 1px,transparent 1px 2px)"></div>
<div style="left:439px;top:224px;width:49px;height:17px;border:1px solid #000;border-bottom-width:2px"></div>
<div style="left:1148px;top:206px;width:16px;height:786px;background:#7396c0"></div>
<div style="left:1148px;top:206px;width:16px;height:16px;background:linear-gradient(90deg,#dbe8f8 50%,#c3d6f1 50%);border:1px solid #4d6391"></div>
<svg style="left:1152px;top:211px;" width="8" height="5" viewBox="0 0 8 5"><path d="M4 0L8 5H0Z" fill="#3f4a68"/></svg>
<div style="left:1148px;top:221px;width:16px;height:280px;background:linear-gradient(90deg,#dbe8f8 50%,#c3d6f1 50%);border:1px solid #4d6391"></div>
<div style="left:1148px;top:976px;width:16px;height:16px;background:linear-gradient(90deg,#dbe8f8 50%,#c3d6f1 50%);border:1px solid #4d6391"></div>
<svg style="left:1152px;top:982px;" width="8" height="5" viewBox="0 0 8 5"><path d="M0 0H8L4 5Z" fill="#3f4a68"/></svg>
<div style="left:411px;top:999px;width:77px;height:20px;background:#e1e1e1;border:1px solid #adadad"></div>
<svg style="left:420px;top:1004px;" width="10" height="11" viewBox="0 0 10 11"><path d="M1.2 1.2L8.8 9.8M8.8 1.2L1.2 9.8" stroke="#e8542a" stroke-width="2.4"/></svg>
<div style="left:437px;top:999px;line-height:20px;font-size:12px;color:#000;"><span class="sx">Abandon</span></div>
<div style="left:1165px;top:204px;width:6px;height:820px;background:#f0f0f0"></div>
<div style="left:1166px;top:204px;width:4px;height:820px;background:#9a9a9a"></div>
<div style="left:1171px;top:228px;width:749px;height:765px;border-left:1px solid #a0a0a0;border-bottom:1px solid #a0a0a0;background:#f0f0f0"></div>
<div style="left:1176px;top:230px;width:744px;height:741px;background:#fff"></div>
<svg style="left:1170px;top:207px" width="750" height="22" viewBox="0 0 750 22"><defs><linearGradient id="tg" x1="0" y1="0" x2="0" y2="1"><stop offset="0" stop-color="#fbfbfb"/><stop offset="1" stop-color="#ececec"/></linearGradient></defs><path d="M544 20.5C548 15 548 6 550 3Q551.5 1.5 554 1.5H623Q625.5 1.5 627 3C629 6 634 15 638 20.5" fill="url(#tg)" stroke="#a8a8a8" stroke-width="1"/><path d="M456 20.5C460 15 461 6 463 3Q464.5 1.5 467 1.5H536Q538.5 1.5 540 3C542 6 545 15 549 20.5" fill="url(#tg)" stroke="#a8a8a8" stroke-width="1"/><path d="M393 20.5C397 15 397 6 399 3Q400.5 1.5 403 1.5H445Q447.5 1.5 449 3C451 6 457 15 461 20.5" fill="url(#tg)" stroke="#a8a8a8" stroke-width="1"/><path d="M323 20.5C327 15 328 6 330 3Q331.5 1.5 334 1.5H382Q384.5 1.5 386 3C388 6 394 15 398 20.5" fill="url(#tg)" stroke="#a8a8a8" stroke-width="1"/><path d="M256 20.5C260 15 261 6 263 3Q264.5 1.5 267 1.5H314Q316.5 1.5 318 3C320 6 324 15 328 20.5" fill="url(#tg)" stroke="#a8a8a8" stroke-width="1"/><path d="M175 20.5C179 15 180 6 182 3Q183.5 1.5 186 1.5H246Q248.5 1.5 250 3C252 6 257 15 261 20.5" fill="url(#tg)" stroke="#a8a8a8" stroke-width="1"/><path d="M106 20.5C110 15 114 6 116 3Q117.5 1.5 120 1.5H165Q167.5 1.5 169 3C171 6 177 15 181 20.5" fill="url(#tg)" stroke="#a8a8a8" stroke-width="1"/><path d="M1 20.5H7C11 15 17 6 19 3Q20.5 1.5 23 1.5H93Q95.5 1.5 97 3C99 6 107 15 111 20.5H750" fill="#fafafa" stroke="#a0a0a0" stroke-width="1"/></svg>
<div style="left:1205.5px;top:208px;line-height:20px;font-weight:bold;font-size:12px;color:#000;">Généralités</div>
<div style="left:1298.5px;top:208px;line-height:20px;font-size:12px;color:#000;"><span class="sx" style="transform:scaleX(.9)">Livraison</span></div>
<div style="left:1368px;top:208px;line-height:20px;font-size:12px;color:#000;"><span class="sx" style="transform:scaleX(.9)">Facturation</span></div>
<div style="left:1449.5px;top:208px;line-height:20px;font-size:12px;color:#000;"><span class="sx" style="transform:scaleX(.9)">Encours</span></div>
<div style="left:1515.5px;top:208px;line-height:20px;font-size:12px;color:#000;"><span class="sx" style="transform:scaleX(.9)">Contacts</span></div>
<div style="left:1586px;top:208px;line-height:20px;font-size:12px;color:#000;"><span class="sx" style="transform:scaleX(.9)">Actions</span></div>
<div style="left:1648.5px;top:208px;line-height:20px;font-size:12px;color:#000;"><span class="sx" style="transform:scaleX(.9)">Opportunités</span></div>
<div style="left:1736px;top:208px;line-height:20px;font-size:12px;color:#000;"><span class="sx" style="transform:scaleX(.9)">Qui, quand ?</span></div>
<svg style="left:1188px;top:211px;" width="14" height="16" viewBox="0 0 14 17"><path d="M4 3H10L13 6V16H4Z" fill="#f3eee2" stroke="#b8b0a0" stroke-width="0.8"/><path d="M1 1H7L9 3V12H1Z" fill="#fbf8f0" stroke="#c0b8a8" stroke-width="0.8"/></svg>
<svg style="left:1279px;top:211px;" width="16" height="16" viewBox="0 0 16 16"><path d="M9 2L15.5 3.5V13L9 14Z" fill="#b8bcc4"/><path d="M0.5 3Q0.5 1.5 2 1.5H9.5V14.5H0.5Z" fill="#d82a2a"/><path d="M1.5 3H8.8V7.5H1.5Z" fill="#303438"/><rect x="1.5" y="10" width="2" height="1.2" fill="#ffd"/><rect x="6.5" y="10" width="2" height="1.2" fill="#ffd"/><rect x="0.5" y="13.2" width="15" height="1.6" fill="#505458"/></svg>
<svg style="left:1351px;top:212px;" width="14" height="15" viewBox="0 0 14 15"><rect x="2" y="1" width="10" height="13" fill="#d8dcd8" stroke="#9a9e9a" stroke-width="0.8"/><rect x="4" y="7" width="7" height="6" fill="#8fbf8f"/><rect x="3.5" y="2.5" width="7" height="3" fill="#f4f6f4"/></svg>
<div style="left:1431px;top:210px;line-height:20px;font-weight:bold;font-size:16px;color:#3c9a28;">$</div>
<svg style="left:1498px;top:211px;" width="16" height="15" viewBox="0 0 16 15"><circle cx="5" cy="4" r="2.5" fill="#e8a850"/><path d="M0 13Q0 7 5 7Q10 7 10 13Z" fill="#d87830"/><circle cx="11" cy="5" r="2.5" fill="#f0c070"/><path d="M6 14Q6 8 11 8Q16 8 16 14Z" fill="#7a9ad0"/></svg>
<svg style="left:1570px;top:213px;" width="11" height="10" viewBox="0 0 11 10"><path d="M1 5L4 8.5L10 1.5" stroke="#1a9aa8" stroke-width="2.2" fill="none"/></svg>
<svg style="left:1721px;top:213px;" width="11" height="10" viewBox="0 0 11 10"><path d="M1 5L4 8.5L10 1.5" stroke="#1a9aa8" stroke-width="2.2" fill="none"/></svg>
<svg style="left:1632px;top:211px;" width="15" height="16" viewBox="0 0 15 16"><path d="M1 9L9 2L14 7L6 14Z" fill="#e4c860" stroke="#b09030" stroke-width="0.6"/><path d="M2 11L10 4L14 8L6 15Z" fill="#90c070" stroke="#608040" stroke-width="0.6"/></svg>
<svg style="left:1181px;top:975px;" width="7" height="8" viewBox="0 0 7 8"><path d="M6 0.5L1.5 4L6 7.5" stroke="#404040" stroke-width="1.8" fill="none"/></svg>
<div style="left:1193px;top:971px;width:648px;height:15px;background:#cdcdcd"></div>
<svg style="left:1909px;top:975px;" width="7" height="8" viewBox="0 0 7 8"><path d="M1 0.5L5.5 4L1 7.5" stroke="#404040" stroke-width="1.8" fill="none"/></svg>
<div style="left:1177px;top:999px;width:80px;height:20px;background:#cccccc;border:1px solid #b8b8b8"></div>
<div style="left:1203px;top:999px;line-height:20px;font-size:12px;color:#6a6a6a;"><span class="sx">Validation</span></div>
<div style="left:1261px;top:999px;width:80px;height:20px;background:#cccccc;border:1px solid #b8b8b8"></div>
<div style="left:1272px;top:999px;line-height:20px;font-size:12px;color:#6a6a6a;"><span class="sx">Sauvegarde</span></div>
<div style="left:1345px;top:999px;width:80px;height:20px;background:#cccccc;border:1px solid #b8b8b8"></div>
<div style="left:1372.5px;top:999px;line-height:20px;font-size:12px;color:#6a6a6a;"><span class="sx">Abandon</span></div>
<svg style="left:1187px;top:1005px;" width="11" height="9" viewBox="0 0 11 9"><path d="M1 4.5L4 7.5L10 1" stroke="#b4b4b4" stroke-width="2" fill="none"/></svg>
<svg style="left:1357px;top:1004px;" width="10" height="11" viewBox="0 0 10 11"><path d="M1.2 1.2L8.8 9.8M8.8 1.2L1.2 9.8" stroke="#a8a8a8" stroke-width="2.4"/></svg>
<svg style="left:1908px;top:1033px;" width="12" height="12" viewBox="0 0 12 12"><rect x="10" y="2" width="1.5" height="1.5" fill="#7a9cc8"/><rect x="10" y="6" width="1.5" height="1.5" fill="#7a9cc8"/><rect x="6" y="6" width="1.5" height="1.5" fill="#7a9cc8"/><rect x="10" y="10" width="1.5" height="1.5" fill="#7a9cc8"/><rect x="6" y="10" width="1.5" height="1.5" fill="#7a9cc8"/><rect x="2" y="10" width="1.5" height="1.5" fill="#7a9cc8"/></svg>
<div style="left:1177px;top:232px;width:580px;height:25px;background:#00a5b5;"></div>
<div style="left:1209.5px;top:238px;line-height:20px;font-weight:bold;font-size:12.5px;color:#fff;"><span class="sx" style="transform:scaleX(.88)">DONNEES</span></div>
<div style="left:1579.5px;top:238px;line-height:20px;font-weight:bold;font-size:12.5px;color:#fff;"><span class="sx" style="transform:scaleX(.89)">CLASSIFICATION</span></div>
<div style="left:1177px;top:663px;width:580px;height:25px;background:#00a5b5;"></div>
<div style="left:1208.5px;top:668px;line-height:20px;font-weight:bold;font-size:12.5px;color:#fff;"><span class="sx" style="transform:scaleX(.89)">ADRESSE PRINCIPALE</span></div>
<div style="left:963.5px;top:267px;width:300px;line-height:20px;font-size:12px;color:#000;text-align:right"><span class="sx" style="transform-origin:100% 0">Réseau</span></div>
<div style="left:1271px;top:268px;width:90px;height:20px;background:#e9eef9"></div>
<div style="left:1275px;top:268px;line-height:20px;font-weight:bold;font-size:12px;color:#000;">0</div>
<div style="left:1364px;top:269px;width:14px;height:14px;background:#fff;border:2px solid #c4c4c4"></div>
<div style="left:1364px;top:266px;width:14px;line-height:20px;text-align:center;font-weight:bold;font-size:11px;color:#000">?</div>
<div style="left:1384.5px;top:267px;line-height:20px;font-size:12px;color:#000;"><span class="sx">Réseau GénéralDocuments liés ?</span></div>
<div style="left:1551px;top:271px;width:10px;height:10px;border:1px solid #c8c8c8;background:#fff"></div>
<div style="left:963.5px;top:292px;width:300px;line-height:20px;font-size:12px;color:#000;text-align:right"><span class="sx" style="transform-origin:100% 0">Client</span></div>
<div style="left:1271px;top:293px;width:90px;height:20px;background:#e9eef9"></div>
<div style="left:1275px;top:293px;line-height:20px;font-weight:bold;font-size:12px;color:#000;">000001</div>
<div style="left:963.5px;top:317px;width:300px;line-height:20px;font-size:12px;color:#000;text-align:right"><span class="sx" style="transform-origin:100% 0">Raison sociale</span></div>
<div style="left:1271px;top:318px;width:240px;height:20px;background:#e9eef9"></div>
<div style="left:1275px;top:318px;line-height:20px;font-weight:bold;font-size:12px;color:#000;">BIGMAT BLOIS</div>
<div style="left:963.5px;top:342px;width:300px;line-height:20px;font-size:12px;color:#000;text-align:right"><span class="sx" style="transform-origin:100% 0">Facturation</span></div>
<div style="left:1271px;top:343px;width:10px;height:17px;background:#e9eef9"></div>
<div style="left:1271px;top:346px;width:10px;height:10px;border:1px solid #c8c8c8;background:#fff"></div>
<div style="left:1331px;top:342px;line-height:20px;font-size:12px;color:#000;"><span class="sx">Livraison</span></div>
<div style="left:1381px;top:346px;width:10px;height:10px;border:1px solid #c8c8c8;background:#fff"></div>
<svg style="left:1272px;top:347px;" width="9" height="9" viewBox="0 0 9 9"><path d="M1.5 4.5L3.8 7L8 1.8" stroke="#c0c0c0" stroke-width="1" fill="none"/></svg>
<svg style="left:1382px;top:347px;" width="9" height="9" viewBox="0 0 9 9"><path d="M1.5 4.5L3.8 7L8 1.8" stroke="#c0c0c0" stroke-width="1" fill="none"/></svg>
<div style="left:963.5px;top:364px;width:300px;line-height:20px;font-size:12px;color:#000;text-align:right"><span class="sx" style="transform-origin:100% 0">Client facturé</span></div>
<div style="left:1271px;top:365px;width:90px;height:20px;background:#e9eef9"></div>
<div style="left:1364px;top:366.5px;width:14px;height:14px;background:#fff;border:2px solid #c4c4c4"></div>
<div style="left:1364px;top:363.5px;width:14px;line-height:20px;text-align:center;font-weight:bold;font-size:11px;color:#000">?</div>
<div style="left:963.5px;top:389px;width:300px;line-height:20px;font-size:12px;color:#000;text-align:right"><span class="sx" style="transform-origin:100% 0">Type blocage</span></div>
<div style="left:1271px;top:390px;width:90px;height:20px;background:#e9eef9"></div>
<div style="left:1364px;top:391.5px;width:14px;height:14px;background:#fff;border:2px solid #c4c4c4"></div>
<div style="left:1364px;top:388.5px;width:14px;line-height:20px;text-align:center;font-weight:bold;font-size:11px;color:#000">?</div>
<div style="left:963.5px;top:414px;width:300px;line-height:20px;font-size:12px;color:#000;text-align:right"><span class="sx" style="transform-origin:100% 0">Motif</span></div>
<div style="left:1271px;top:415px;width:240px;height:98px;background:#e9eef9;border:1px solid #a8a8a8"></div>
<div style="left:1492px;top:416px;width:18px;height:96px;background:#ececec"></div>
<svg style="left:1496px;top:424px;" width="9" height="6" viewBox="0 0 9 6"><path d="M1 5L4.5 1.5L8 5" stroke="#b0b0b0" stroke-width="1.3" fill="none"/></svg>
<svg style="left:1496px;top:499px;" width="9" height="6" viewBox="0 0 9 6"><path d="M1 1L4.5 4.5L8 1" stroke="#b0b0b0" stroke-width="1.3" fill="none"/></svg>
<div style="left:963.0px;top:517px;width:300px;line-height:20px;font-size:12px;color:#000;text-align:right"><span class="sx" style="transform-origin:100% 0">Commentaire ext</span></div>
<div style="left:1270px;top:518px;width:455px;height:65px;background:#e9eef9;border:1px solid #a8a8a8"></div>
<div style="left:1706px;top:519px;width:18px;height:63px;background:#ececec"></div>
<svg style="left:1710px;top:527px;" width="9" height="6" viewBox="0 0 9 6"><path d="M1 5L4.5 1.5L8 5" stroke="#b0b0b0" stroke-width="1.3" fill="none"/></svg>
<svg style="left:1710px;top:569px;" width="9" height="6" viewBox="0 0 9 6"><path d="M1 1L4.5 4.5L8 1" stroke="#b0b0b0" stroke-width="1.3" fill="none"/></svg>
<div style="left:1274px;top:518px;line-height:20px;font-weight:bold;font-size:12px;color:#000;">Commentaire externe du client</div>
<div style="left:963.0px;top:587px;width:300px;line-height:20px;font-size:12px;color:#000;text-align:right"><span class="sx" style="transform-origin:100% 0">Commentaire int</span></div>
<div style="left:1270px;top:588px;width:455px;height:65px;background:#e9eef9;border:1px solid #a8a8a8"></div>
<div style="left:1706px;top:589px;width:18px;height:63px;background:#ececec"></div>
<svg style="left:1710px;top:597px;" width="9" height="6" viewBox="0 0 9 6"><path d="M1 5L4.5 1.5L8 5" stroke="#b0b0b0" stroke-width="1.3" fill="none"/></svg>
<svg style="left:1710px;top:639px;" width="9" height="6" viewBox="0 0 9 6"><path d="M1 1L4.5 4.5L8 1" stroke="#b0b0b0" stroke-width="1.3" fill="none"/></svg>
<div style="left:1274px;top:588px;line-height:20px;font-weight:bold;font-size:12px;color:#000;">Commentaire interne du client</div>
<div style="left:1308px;top:267px;width:300px;line-height:20px;font-size:12px;color:#000;text-align:right"><span class="sx" style="transform-origin:100% 0">Groupe</span></div>
<div style="left:1616px;top:268px;width:110px;height:20px;background:#e9eef9"></div>
<div style="left:1620px;top:268px;line-height:20px;font-weight:bold;font-size:12px;color:#000;">000001</div>
<div style="left:1729px;top:269px;width:14px;height:14px;background:#fff;border:2px solid #c4c4c4"></div>
<div style="left:1729px;top:266px;width:14px;line-height:20px;text-align:center;font-weight:bold;font-size:11px;color:#000">?</div>
<div style="left:1750px;top:269px;width:14px;height:14px;background:#c8c8c8;border:1px solid #bcbcbc"></div>
<div style="left:1308px;top:292px;width:300px;line-height:20px;font-size:12px;color:#000;text-align:right"><span class="sx" style="transform-origin:100% 0">Forme juridique</span></div>
<div style="left:1616px;top:293px;width:110px;height:20px;background:#e9eef9"></div>
<div style="left:1620px;top:293px;line-height:20px;font-weight:bold;font-size:12px;color:#000;">EURL</div>
<div style="left:1729px;top:294px;width:14px;height:14px;background:#fff;border:2px solid #c4c4c4"></div>
<div style="left:1729px;top:291px;width:14px;line-height:20px;text-align:center;font-weight:bold;font-size:11px;color:#000">?</div>
<div style="left:1749.5px;top:292px;line-height:20px;font-size:12px;color:#000;"><span class="sx">Entreprise Unipers. à Resp. Limitée</span></div>
<div style="left:1308px;top:317px;width:300px;line-height:20px;font-size:12px;color:#000;text-align:right"><span class="sx" style="transform-origin:100% 0">Code SIRET</span></div>
<div style="left:1616px;top:318px;width:110px;height:20px;background:#e9eef9"></div>
<div style="left:1308px;top:342px;width:300px;line-height:20px;font-size:12px;color:#000;text-align:right"><span class="sx" style="transform-origin:100% 0">Numéro SIREN</span></div>
<div style="left:1616px;top:343px;width:110px;height:20px;background:#e9eef9"></div>
<div style="left:1308px;top:367px;width:300px;line-height:20px;font-size:12px;color:#000;text-align:right"><span class="sx" style="transform-origin:100% 0">Code NAF</span></div>
<div style="left:1616px;top:368px;width:110px;height:20px;background:#e9eef9"></div>
<div style="left:1620px;top:368px;line-height:20px;font-weight:bold;font-size:12px;color:#000;">0115Z</div>
<div style="left:1729px;top:369px;width:14px;height:14px;background:#fff;border:2px solid #c4c4c4"></div>
<div style="left:1729px;top:366px;width:14px;line-height:20px;text-align:center;font-weight:bold;font-size:11px;color:#000">?</div>
<div style="left:1308px;top:392px;width:300px;line-height:20px;font-size:12px;color:#000;text-align:right"><span class="sx" style="transform-origin:100% 0">Commercial</span></div>
<div style="left:1616px;top:393px;width:110px;height:20px;background:#e9eef9"></div>
<div style="left:1620px;top:393px;line-height:20px;font-weight:bold;font-size:12px;color:#000;">NORD</div>
<div style="left:1729px;top:394px;width:14px;height:14px;background:#fff;border:2px solid #c4c4c4"></div>
<div style="left:1729px;top:391px;width:14px;line-height:20px;text-align:center;font-weight:bold;font-size:11px;color:#000">?</div>
<div style="left:1749.5px;top:392px;line-height:20px;font-size:12px;color:#000;"><span class="sx">Paul PATRICK</span></div>
<div style="left:1308px;top:417px;width:300px;line-height:20px;font-size:12px;color:#000;text-align:right"><span class="sx" style="transform-origin:100% 0">Famille</span></div>
<div style="left:1616px;top:418px;width:110px;height:20px;background:#e9eef9"></div>
<div style="left:1620px;top:418px;line-height:20px;font-weight:bold;font-size:12px;color:#000;">Pro</div>
<div style="left:1729px;top:419px;width:14px;height:14px;background:#fff;border:2px solid #c4c4c4"></div>
<div style="left:1729px;top:416px;width:14px;line-height:20px;text-align:center;font-weight:bold;font-size:11px;color:#000">?</div>
<div style="left:1749.5px;top:417px;line-height:20px;font-size:12px;color:#000;"><span class="sx">Professionnel</span></div>
<div style="left:1308px;top:442px;width:300px;line-height:20px;font-size:12px;color:#000;text-align:right"><span class="sx" style="transform-origin:100% 0">Secteur activité</span></div>
<div style="left:1616px;top:443px;width:110px;height:20px;background:#e9eef9"></div>
<div style="left:1620px;top:443px;line-height:20px;font-weight:bold;font-size:12px;color:#000;">07</div>
<div style="left:1729px;top:444px;width:14px;height:14px;background:#fff;border:2px solid #c4c4c4"></div>
<div style="left:1729px;top:441px;width:14px;line-height:20px;text-align:center;font-weight:bold;font-size:11px;color:#000">?</div>
<div style="left:1749.5px;top:442px;line-height:20px;font-size:12px;color:#000;"><span class="sx">Menuiserie</span></div>
<div style="left:1308px;top:467px;width:300px;line-height:20px;font-size:12px;color:#000;text-align:right"><span class="sx" style="transform-origin:100% 0">Domaine activité</span></div>
<div style="left:1616px;top:468px;width:110px;height:20px;background:#e9eef9"></div>
<div style="left:1308px;top:492px;width:300px;line-height:20px;font-size:12px;color:#000;text-align:right"><span class="sx" style="transform-origin:100% 0">Indice confiance</span></div>
<div style="left:1616px;top:493px;width:110px;height:20px;background:#e9eef9"></div>
<div style="left:1620px;top:493px;line-height:20px;font-weight:bold;font-size:12px;color:#000;">001</div>
<div style="left:1729px;top:494px;width:14px;height:14px;background:#fff;border:2px solid #c4c4c4"></div>
<div style="left:1729px;top:491px;width:14px;line-height:20px;text-align:center;font-weight:bold;font-size:11px;color:#000">?</div>
<div style="left:1749.5px;top:492px;line-height:20px;font-size:12px;color:#000;"><span class="sx">AAA</span></div>
<div style="left:960.5px;top:692px;width:300px;line-height:20px;font-size:12px;color:#000;text-align:right"><span class="sx" style="transform-origin:100% 0">Correspondant</span></div>
<div style="left:1268px;top:693px;width:200px;height:20px;background:#e9eef9"></div>
<div style="left:1245.5px;top:692px;width:300px;line-height:20px;font-size:12px;color:#000;text-align:right"><span class="sx" style="transform-origin:100% 0">Contact</span></div>
<div style="left:1553px;top:693px;width:170px;height:20px;background:#e9eef9"></div>
<div style="left:960.5px;top:717px;width:300px;line-height:20px;font-size:12px;color:#000;text-align:right"><span class="sx" style="transform-origin:100% 0">Adresse</span></div>
<div style="left:1268px;top:718px;width:455px;height:18px;background:#e9eef9"></div>
<div style="left:1271.5px;top:717px;line-height:20px;font-weight:bold;font-size:12px;color:#000;">5 BLD DE L'INDUSTRIE</div>
<div style="left:1268px;top:737px;width:455px;height:18px;background:#e9eef9"></div>
<div style="left:1271.5px;top:736px;line-height:20px;font-weight:bold;font-size:12px;color:#000;">Complément adresse</div>
<div style="left:1268px;top:756px;width:455px;height:18px;background:#e9eef9"></div>
<div style="left:1271.5px;top:755px;line-height:20px;font-weight:bold;font-size:12px;color:#000;">Complément adresse bis</div>
<div style="left:960.5px;top:780px;width:300px;line-height:20px;font-size:12px;color:#000;text-align:right"><span class="sx" style="transform-origin:100% 0">Code postal</span></div>
<div style="left:1268px;top:780px;width:200px;height:20px;background:#e9eef9"></div>
<div style="left:1271.5px;top:780px;line-height:20px;font-weight:bold;font-size:12px;color:#000;">01120</div>
<div style="left:1471px;top:781px;width:14px;height:14px;background:#fff;border:2px solid #c4c4c4"></div>
<div style="left:1471px;top:778px;width:14px;line-height:20px;text-align:center;font-weight:bold;font-size:11px;color:#000">?</div>
<div style="left:1245.5px;top:780px;width:300px;line-height:20px;font-size:12px;color:#000;text-align:right"><span class="sx" style="transform-origin:100% 0">Ville</span></div>
<div style="left:1553px;top:780px;width:170px;height:20px;background:#e9eef9"></div>
<div style="left:1556.5px;top:780px;line-height:20px;font-weight:bold;font-size:12px;color:#000;">MONTLUEL</div>
<div style="left:1726px;top:781px;width:14px;height:14px;background:#fff;border:2px solid #c4c4c4"></div>
<div style="left:1726px;top:778px;width:14px;line-height:20px;text-align:center;font-weight:bold;font-size:11px;color:#000">?</div>
<div style="left:960.5px;top:804.5px;width:300px;line-height:20px;font-size:12px;color:#000;text-align:right"><span class="sx" style="transform-origin:100% 0">Pays</span></div>
<div style="left:1268px;top:805px;width:200px;height:20px;background:#e9eef9"></div>
<div style="left:1271.5px;top:805px;line-height:20px;font-weight:bold;font-size:12px;color:#000;">FR</div>
<div style="left:1471px;top:806px;width:14px;height:14px;background:#fff;border:2px solid #c4c4c4"></div>
<div style="left:1471px;top:803px;width:14px;line-height:20px;text-align:center;font-weight:bold;font-size:11px;color:#000">?</div>
<div style="left:960.5px;top:829.5px;width:300px;line-height:20px;font-size:12px;color:#000;text-align:right"><span class="sx" style="transform-origin:100% 0">Téléphone</span></div>
<div style="left:1268px;top:830px;width:200px;height:20px;background:#e9eef9"></div>
<div style="left:1271.5px;top:830px;line-height:20px;font-weight:bold;font-size:12px;color:#000;">05 63 40 50 60</div>
<div style="left:1471px;top:831px;width:14px;height:14px;background:#fff;border:2px solid #c4c4c4"></div>
<div style="left:1471px;top:828px;width:14px;line-height:20px;text-align:center;font-weight:bold;font-size:11px;color:#000">?</div>
<div style="left:1245.5px;top:829.5px;width:300px;line-height:20px;font-size:12px;color:#000;text-align:right"><span class="sx" style="transform-origin:100% 0">Portable</span></div>
<div style="left:1553px;top:830px;width:170px;height:20px;background:#e9eef9"></div>
<div style="left:1556.5px;top:830px;line-height:20px;font-weight:bold;font-size:12px;color:#000;">06 10 56 91 01</div>
<div style="left:1726px;top:831px;width:14px;height:14px;background:#fff;border:2px solid #c4c4c4"></div>
<div style="left:1726px;top:828px;width:14px;line-height:20px;text-align:center;font-weight:bold;font-size:11px;color:#000">?</div>
<div style="left:960.5px;top:854px;width:300px;line-height:20px;font-size:12px;color:#000;text-align:right"><span class="sx" style="transform-origin:100% 0">E.Mail</span></div>
<div style="left:1268px;top:855px;width:200px;height:20px;background:#fff;border:1px solid #707070"></div>
<div style="left:1269px;top:856px;width:180px;height:18px;background:#e9eef9"></div>
<div style="left:1271.5px;top:855px;line-height:20px;font-weight:bold;font-size:12px;color:#000;">test@test.fr,fhoubert@elcia.co</div>
<div style="left:1449px;top:856px;width:18px;height:18px;background:#f0f0f0"></div>
<svg style="left:1453px;top:858px;" width="9" height="14" viewBox="0 0 9 14"><path d="M1 5L4.5 1.5L8 5M1 9L4.5 12.5L8 9" stroke="#606060" stroke-width="1.2" fill="none"/></svg>
<div style="left:1245.5px;top:854px;width:300px;line-height:20px;font-size:12px;color:#000;text-align:right"><span class="sx" style="transform-origin:100% 0">Fax</span></div>
<div style="left:1553px;top:855px;width:170px;height:20px;background:#e9eef9"></div>
<div style="left:1556.5px;top:855px;line-height:20px;font-weight:bold;font-size:12px;color:#000;">02 54 42 55 87</div>
<div style="left:1726px;top:856px;width:14px;height:14px;background:#fff;border:2px solid #c4c4c4"></div>
<div style="left:1726px;top:853px;width:14px;line-height:20px;text-align:center;font-weight:bold;font-size:11px;color:#000">?</div>
</body></html>
